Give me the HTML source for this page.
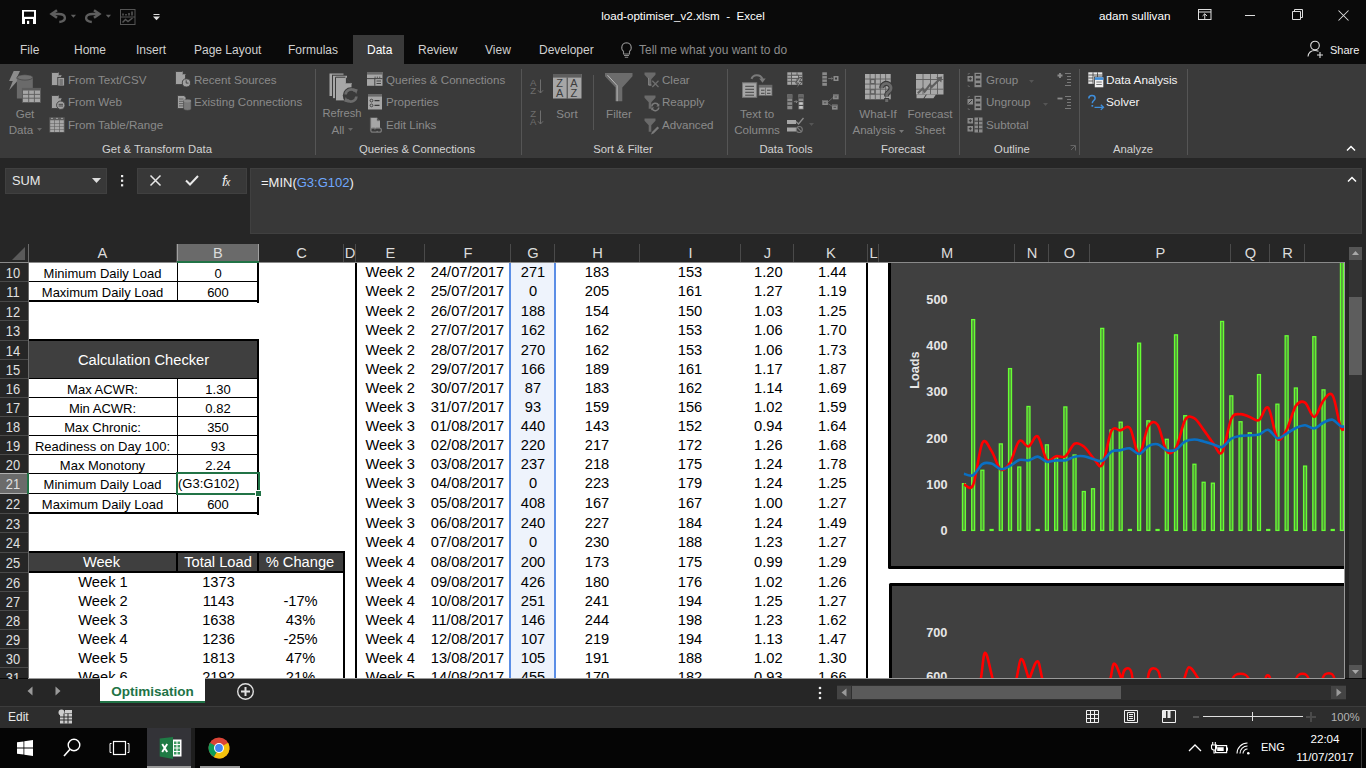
<!DOCTYPE html>
<html><head><meta charset="utf-8"><style>
html,body{margin:0;padding:0;}
body{width:1366px;height:768px;overflow:hidden;position:relative;background:#0a0a0a;font-family:"Liberation Sans", sans-serif;}
.t{position:absolute;white-space:pre;font-family:"Liberation Sans", sans-serif;}
svg{overflow:visible;}
</style></head><body>
<div style="position:absolute;left:0px;top:0px;width:1366px;height:64px;background:#0a0a0a"></div><svg style="position:absolute;left:22px;top:10px;" width="14" height="14" viewBox="0 0 14 14"><path d="M0 0h14v14H0z" fill="#fff"/><rect x="2" y="1.6" width="10" height="5.2" fill="#0a0a0a"/><rect x="3" y="9" width="8" height="5" fill="#0a0a0a"/><rect x="5" y="10.8" width="2.2" height="3.2" fill="#fff"/></svg><svg style="position:absolute;left:50px;top:9px;" width="28" height="16" viewBox="0 0 28 16"><path d="M7 1.2L1.6 5L7 8.8" stroke="#5e5e5e" stroke-width="2.6" fill="none"/><path d="M2.5 5H8.5C12.5 5 14.9 6.6 14.9 9C14.9 11.2 13 12.6 9.3 13" stroke="#5e5e5e" stroke-width="2.4" fill="none"/><path d="M20.8 5.8h5.2l-2.6 3z" fill="#5e5e5e"/></svg><svg style="position:absolute;left:85px;top:9px;" width="28" height="16" viewBox="0 0 28 16"><path d="M9 1.2L14.4 5L9 8.8" stroke="#5e5e5e" stroke-width="2.6" fill="none"/><path d="M13.5 5H7.5C3.5 5 1.1 6.6 1.1 9C1.1 11.2 3 12.6 6.8 13" stroke="#5e5e5e" stroke-width="2.4" fill="none"/><path d="M20.8 5.8h5.2l-2.6 3z" fill="#5e5e5e"/></svg><svg style="position:absolute;left:120px;top:9px;" width="16" height="16" viewBox="0 0 16 16"><rect x="0.5" y="0.5" width="14.5" height="15" stroke="#555" stroke-width="1" fill="none"/><path d="M0.5 8h14.5" stroke="#555"/><path d="M3 6.5v-2M6 6.5v-1.5M9 6.5v-2.5M12 6.5v-4" stroke="#555" stroke-width="1.6"/><path d="M2.5 13.5l3-3 2.5 2 4.5-3.5" stroke="#555" stroke-width="1.5" fill="none"/></svg><svg style="position:absolute;left:153px;top:14px;" width="7" height="7" viewBox="0 0 7 7"><path d="M0.5 0.5h6" stroke="#ddd" stroke-width="1"/><path d="M0 2.5h7l-3.5 3.8z" fill="#ddd"/></svg><div class="t" style="left:383px;width:600px;text-align:center;top:10.18px;font-size:11.6px;line-height:11.6px;color:#ffffff;">load-optimiser_v2.xlsm  -  Excel</div><div class="t" style="left:1099px;top:10.10px;font-size:11.7px;line-height:11.7px;color:#ffffff;">adam sullivan</div><svg style="position:absolute;left:1198px;top:9px;" width="14" height="12" viewBox="0 0 14 12"><rect x="0.5" y="0.5" width="12.5" height="10" stroke="#ddd" fill="none"/><path d="M0.5 3h12.5M6.75 10V4.8M4.5 7l2.25-2.2L9 7" stroke="#ddd" fill="none"/></svg><svg style="position:absolute;left:1245px;top:15px;" width="12" height="2" viewBox="0 0 12 2"><rect x="0" y="0" width="10" height="1" fill="#ddd"/></svg><svg style="position:absolute;left:1292px;top:9px;" width="11" height="12" viewBox="0 0 11 12"><path d="M2.5 2.5V0.5h8v8h-2M0.5 2.5h8v8h-8z" stroke="#ddd" fill="none"/></svg><svg style="position:absolute;left:1338px;top:10px;" width="11" height="11" viewBox="0 0 11 11"><path d="M0.5 0.5L10.5 10.5M10.5 0.5L0.5 10.5" stroke="#ddd" stroke-width="1.05" fill="none"/></svg><div style="position:absolute;left:353px;top:35px;width:51px;height:29px;background:#3a3a3a"></div><div class="t" style="left:20px;top:43.84px;font-size:12px;line-height:12px;color:#d0d0d0;">File</div><div class="t" style="left:74px;top:43.84px;font-size:12px;line-height:12px;color:#d0d0d0;">Home</div><div class="t" style="left:136px;top:43.84px;font-size:12px;line-height:12px;color:#d0d0d0;">Insert</div><div class="t" style="left:194px;top:43.84px;font-size:12px;line-height:12px;color:#d0d0d0;">Page Layout</div><div class="t" style="left:288px;top:43.84px;font-size:12px;line-height:12px;color:#d0d0d0;">Formulas</div><div class="t" style="left:367px;top:43.84px;font-size:12px;line-height:12px;color:#ffffff;">Data</div><div class="t" style="left:418px;top:43.84px;font-size:12px;line-height:12px;color:#d0d0d0;">Review</div><div class="t" style="left:485px;top:43.84px;font-size:12px;line-height:12px;color:#d0d0d0;">View</div><div class="t" style="left:539px;top:43.84px;font-size:12px;line-height:12px;color:#d0d0d0;">Developer</div><svg style="position:absolute;left:621px;top:42px;" width="12" height="16" viewBox="0 0 12 16"><path d="M5.5 0.8a4.8 4.8 0 0 1 3 8.5v2.7h-6v-2.7a4.8 4.8 0 0 1 3-8.5z" stroke="#8c8c8c" stroke-width="1.1" fill="none"/><path d="M3 13.5h5M3.8 15.3h3.4" stroke="#8c8c8c" stroke-width="1.1"/></svg><div class="t" style="left:639px;top:43.84px;font-size:12px;line-height:12px;color:#8c8c8c;">Tell me what you want to do</div><svg style="position:absolute;left:1307px;top:40px;" width="18" height="18" viewBox="0 0 18 18"><circle cx="8" cy="5.5" r="4.3" stroke="#ddd" stroke-width="1.1" fill="none"/><path d="M1 16.5c0.5-4 3-6 7-6c1.5 0 2.5 0.3 3.5 0.8M13 12v6M10 15h6" stroke="#ddd" stroke-width="1.1" fill="none"/></svg><div class="t" style="left:1330px;top:44.69px;font-size:11px;line-height:11px;color:#f0f0f0;">Share</div><div style="position:absolute;left:0px;top:64px;width:1366px;height:94px;background:#3a3a3a"></div><div style="position:absolute;left:315px;top:69px;width:1px;height:86px;background:#555"></div><div style="position:absolute;left:521px;top:69px;width:1px;height:86px;background:#555"></div><div style="position:absolute;left:727px;top:69px;width:1px;height:86px;background:#555"></div><div style="position:absolute;left:845px;top:69px;width:1px;height:86px;background:#555"></div><div style="position:absolute;left:959px;top:69px;width:1px;height:86px;background:#555"></div><div style="position:absolute;left:1079px;top:69px;width:1px;height:86px;background:#555"></div><div style="position:absolute;left:1187px;top:69px;width:1px;height:86px;background:#555"></div><div style="position:absolute;left:593px;top:75px;width:1px;height:55px;background:#555"></div><div class="t" style="left:-143px;width:600px;text-align:center;top:144.43px;font-size:11.3px;line-height:11.3px;color:#d2d2d2;">Get &amp; Transform Data</div><div class="t" style="left:117px;width:600px;text-align:center;top:144.43px;font-size:11.3px;line-height:11.3px;color:#d2d2d2;">Queries &amp; Connections</div><div class="t" style="left:323px;width:600px;text-align:center;top:144.43px;font-size:11.3px;line-height:11.3px;color:#d2d2d2;">Sort &amp; Filter</div><div class="t" style="left:486px;width:600px;text-align:center;top:144.43px;font-size:11.3px;line-height:11.3px;color:#d2d2d2;">Data Tools</div><div class="t" style="left:603px;width:600px;text-align:center;top:144.43px;font-size:11.3px;line-height:11.3px;color:#d2d2d2;">Forecast</div><div class="t" style="left:712px;width:600px;text-align:center;top:144.43px;font-size:11.3px;line-height:11.3px;color:#d2d2d2;">Outline</div><div class="t" style="left:833px;width:600px;text-align:center;top:144.43px;font-size:11.3px;line-height:11.3px;color:#d2d2d2;">Analyze</div><svg style="position:absolute;left:9px;top:71px;" width="33" height="33" viewBox="0 0 33 33"><path d="M4.7 0H11L7.4 7.8H10.3L0.1 19.2L3.8 10H0.1z" fill="#8c8c8c"/><path d="M7.9 6.4a7.9 2.7 0 0 1 15.9 0V27.4H7.9z" fill="#6a6a6a"/><ellipse cx="15.9" cy="6.4" rx="7.9" ry="2.7" fill="#707070" stroke="#3a3a3a" stroke-width="0.6"/><rect x="12.9" y="16.9" width="19.1" height="15" fill="#5c5c5c"/><rect x="14" y="19.5" width="17" height="11.5" fill="#a6a6a6"/><path d="M14 23.4h17M14 27.2h17M19.7 19.5v11.5M25.4 19.5v11.5" stroke="#5c5c5c" stroke-width="0.9"/></svg><div class="t" style="left:-275px;width:600px;text-align:center;top:107.68px;font-size:11.6px;line-height:11.6px;color:#8a8a8a;">Get</div><div class="t" style="left:-279px;width:600px;text-align:center;top:123.68px;font-size:11.6px;line-height:11.6px;color:#8a8a8a;">Data</div><svg style="position:absolute;left:36.5px;top:128px;" width="5" height="3" viewBox="0 0 5 3"><path d="M0 0h5l-2.5 3z" fill="#666"/></svg><svg style="position:absolute;left:51px;top:72px;" width="16" height="16" viewBox="0 0 16 16"><path d="M0.5 0.5h7l3 3V13.5H0.5z" fill="#a0a0a0" stroke="#3a3a3a" stroke-width="0.8"/><path d="M7.5 0.5v3h3" fill="#3a3a3a" stroke="#8c8c8c" stroke-width="0.8"/><rect x="6.8" y="5.4" width="6.8" height="8.6" fill="#a0a0a0" stroke="#3a3a3a" stroke-width="0.9"/><path d="M8.5 8h3.4M8.5 10h3.4M8.5 12h3.4" stroke="#3a3a3a" stroke-width="0.8"/></svg><div class="t" style="left:68px;top:74.18px;font-size:11.6px;line-height:11.6px;color:#8a8a8a;">From Text/CSV</div><svg style="position:absolute;left:51px;top:95px;" width="16" height="16" viewBox="0 0 16 16"><path d="M0.5 0.5h7l3 3V13.5H0.5z" fill="#a0a0a0" stroke="#3a3a3a" stroke-width="0.8"/><path d="M7.5 0.5v3h3" fill="#3a3a3a" stroke="#8c8c8c" stroke-width="0.8"/><circle cx="9.8" cy="10.2" r="4.2" fill="#a0a0a0" stroke="#3a3a3a" stroke-width="0.9"/><path d="M7.6 9.3h4.4M7.6 11h4.4" stroke="#3a3a3a" stroke-width="0.9"/></svg><div class="t" style="left:68px;top:96.18px;font-size:11.6px;line-height:11.6px;color:#8a8a8a;">From Web</div><svg style="position:absolute;left:49px;top:117px;" width="16" height="16" viewBox="0 0 16 16"><rect x="0.3" y="0.3" width="15.4" height="15.2" fill="#5c5c5c"/><path d="M2 1.4h2M7 1.4h2M12 1.4h2" stroke="#a6a6a6" stroke-width="0.9"/><path d="M1.2 3.3h4.2v2.6H1.2zM6 3.3h4v2.6H6zM10.6 3.3h4.2v2.6h-4.2zM1.2 6.6h4.2v2.6H1.2zM6 6.6h4v2.6H6zM10.6 6.6h4.2v2.6h-4.2zM1.2 9.8h4.2v2.6H1.2zM6 9.8h4v2.6H6zM10.6 9.8h4.2v2.6h-4.2zM1.2 12.9h4.2v2H1.2zM6 12.9h4v2H6zM10.6 12.9h4.2v2h-4.2z" fill="#a6a6a6"/></svg><div class="t" style="left:68px;top:119.18px;font-size:11.6px;line-height:11.6px;color:#8a8a8a;">From Table/Range</div><svg style="position:absolute;left:175px;top:71px;" width="16" height="16" viewBox="0 0 16 16"><path d="M0.5 0.5h7l3 3V13.5H0.5z" fill="#a0a0a0" stroke="#3a3a3a" stroke-width="0.8"/><path d="M7.5 0.5v3h3" fill="#3a3a3a" stroke="#8c8c8c" stroke-width="0.8"/><circle cx="11.4" cy="11.9" r="4.1" fill="#a0a0a0" stroke="#3a3a3a" stroke-width="0.9"/><path d="M11.2 9.3v2.8h2.3" stroke="#3a3a3a" stroke-width="0.9" fill="none"/></svg><div class="t" style="left:194px;top:74.18px;font-size:11.6px;line-height:11.6px;color:#8a8a8a;">Recent Sources</div><svg style="position:absolute;left:177px;top:95px;" width="16" height="16" viewBox="0 0 16 16"><path d="M0.5 0.5h6.5l2 2V13.5H0.5z" fill="#a0a0a0" stroke="#3a3a3a" stroke-width="0.8"/><path d="M2 4h4.5M2 6.3h4.5M2 8.6h4.5M2 10.9h4.5" stroke="#5a5a5a" stroke-width="0.9"/><path d="M6.6 6a3.8 1.4 0 0 1 7.6 0V14a3.8 1.4 0 0 1-7.6 0z" fill="#7a7a7a" stroke="#3a3a3a" stroke-width="0.6"/><ellipse cx="10.4" cy="6" rx="3.8" ry="1.4" fill="#8a8a8a"/></svg><div class="t" style="left:194px;top:96.18px;font-size:11.6px;line-height:11.6px;color:#8a8a8a;">Existing Connections</div><svg style="position:absolute;left:328px;top:72px;" width="32" height="32" viewBox="0 0 32 32"><rect x="1" y="1" width="15" height="23.5" fill="#a6a6a6" stroke="#3a3a3a" stroke-width="1"/><rect x="4.5" y="3.2" width="15" height="23.5" fill="#a6a6a6" stroke="#3a3a3a" stroke-width="1"/><path d="M7.5 5.2h10l6.5 6.5v17.2h-16.5z" fill="#a6a6a6" stroke="#3a3a3a" stroke-width="1"/><path d="M17.5 5.2v6.5h6.5" fill="#3a3a3a" stroke="#a6a6a6" stroke-width="0.8"/><circle cx="23" cy="23.5" r="8.2" fill="#3a3a3a"/><path d="M17.6 22.5a5.5 5.5 0 0 1 9.6-3.2M28.4 24.5a5.5 5.5 0 0 1-9.6 3.2" stroke="#6c6c6c" stroke-width="2.6" fill="none"/><path d="M25.2 16.2l4.6 1.2-1.6 4.6zM20.8 30.8l-4.6-1.2 1.6-4.6z" fill="#6c6c6c"/></svg><div class="t" style="left:42px;width:600px;text-align:center;top:108.02px;font-size:11.2px;line-height:11.2px;color:#8a8a8a;">Refresh</div><div class="t" style="left:38px;width:600px;text-align:center;top:123.68px;font-size:11.6px;line-height:11.6px;color:#8a8a8a;">All</div><svg style="position:absolute;left:348px;top:128px;" width="5" height="3" viewBox="0 0 5 3"><path d="M0 0h5l-2.5 3z" fill="#666"/></svg><svg style="position:absolute;left:367px;top:72px;" width="16" height="14" viewBox="0 0 16 14"><rect x="0" y="0" width="15.5" height="13.8" fill="#a6a6a6"/><rect x="0" y="0" width="15.5" height="2.6" fill="#6a6a6a"/><path d="M7.5 5.2h1.2M9.8 5.2h1.2M12.1 5.2h1.2" stroke="#3a3a3a" stroke-width="0.9"/><path d="M0 6.6h15.5M7.8 6.6v7.2" stroke="#3a3a3a" stroke-width="0.9"/><path d="M9.5 9h4.5M9.5 11.5h4.5" stroke="#3a3a3a" stroke-width="0.9"/></svg><div class="t" style="left:386px;top:74.18px;font-size:11.6px;line-height:11.6px;color:#8a8a8a;">Queries &amp; Connections</div><svg style="position:absolute;left:368px;top:94px;" width="15" height="16" viewBox="0 0 15 16"><rect x="0" y="0" width="14" height="15.5" fill="#a6a6a6"/><rect x="0" y="0" width="14" height="2.6" fill="#6a6a6a"/><circle cx="3.5" cy="6.6" r="1.4" stroke="#3a3a3a" stroke-width="0.9" fill="none"/><circle cx="3.5" cy="11.4" r="1.4" stroke="#3a3a3a" stroke-width="0.9" fill="none"/><path d="M6.5 6.6h5M6.5 11.4h5" stroke="#3a3a3a" stroke-width="1.1"/></svg><div class="t" style="left:386px;top:96.18px;font-size:11.6px;line-height:11.6px;color:#8a8a8a;">Properties</div><svg style="position:absolute;left:369px;top:117px;" width="16" height="17" viewBox="0 0 16 17"><path d="M1.5 0.8h6.5l3 3V11H1.5z" fill="#a6a6a6"/><path d="M8 0.8v3h3" fill="#3a3a3a" stroke="#8a8a8a" stroke-width="0.7"/><path d="M1.5 0.8V13.5" stroke="#6a6a6a" stroke-width="1.2"/><path d="M5.8 11.2h-2a2 2 0 0 0 0 4h3a2 2 0 0 0 1.8-1.2M8.2 15.2h2.2a2 2 0 0 0 0-4h-3a2 2 0 0 0-1.8 1.2" stroke="#7a7a7a" stroke-width="1.2" fill="none"/></svg><div class="t" style="left:386px;top:119.18px;font-size:11.6px;line-height:11.6px;color:#8a8a8a;">Edit Links</div><svg style="position:absolute;left:530px;top:78px;" width="15" height="18" viewBox="0 0 15 18"><text x="0" y="8" font-size="9.6" font-family="Liberation Sans" fill="#6e6e6e">A</text><text x="0.3" y="15.8" font-size="9.6" font-family="Liberation Sans" fill="#6e6e6e">Z</text><path d="M10.5 1.5v13.5M8 12.3l2.5 2.7 2.5-2.7" stroke="#6e6e6e" stroke-width="1" fill="none"/></svg><svg style="position:absolute;left:530px;top:109px;" width="15" height="18" viewBox="0 0 15 18"><text x="0.3" y="8" font-size="9.6" font-family="Liberation Sans" fill="#6e6e6e">Z</text><text x="0" y="15.8" font-size="9.6" font-family="Liberation Sans" fill="#6e6e6e">A</text><path d="M10.5 1.5v13.5M8 12.3l2.5 2.7 2.5-2.7" stroke="#6e6e6e" stroke-width="1" fill="none"/></svg><svg style="position:absolute;left:553px;top:74px;" width="29" height="25" viewBox="0 0 29 25"><rect x="0" y="0" width="28.5" height="24.5" fill="#a6a6a6"/><rect x="0" y="0" width="28.5" height="3.6" fill="#5e5e5e"/><path d="M14.2 3.6v21" stroke="#3a3a3a" stroke-width="0.9"/><text x="3.2" y="13" font-size="11" font-family="Liberation Sans" fill="#3c3c3c">Z</text><text x="3" y="23" font-size="11" font-family="Liberation Sans" fill="#3c3c3c">A</text><text x="17.2" y="13" font-size="11" font-family="Liberation Sans" fill="#3c3c3c">A</text><text x="17.5" y="23" font-size="11" font-family="Liberation Sans" fill="#3c3c3c">Z</text></svg><div class="t" style="left:267px;width:600px;text-align:center;top:108.18px;font-size:11.6px;line-height:11.6px;color:#8a8a8a;">Sort</div><svg style="position:absolute;left:605px;top:73px;" width="28" height="28" viewBox="0 0 28 28"><path d="M0 0h27.5v3.2l-10.2 11.2v13.8h-6.8v-13.8l-10.5-11.2z" fill="#6c6c6c"/><path d="M2.5 2.2l9.6 10.4v15.6" stroke="#c4c4c4" stroke-width="0.9" fill="none"/></svg><div class="t" style="left:319px;width:600px;text-align:center;top:108.18px;font-size:11.6px;line-height:11.6px;color:#8a8a8a;">Filter</div><svg style="position:absolute;left:644px;top:72px;" width="17" height="17" viewBox="0 0 17 17"><path d="M0.5 0.5h11v2.2l-4.2 4.5v6.5h-2.6v-6.5l-4.2-4.5z" fill="#6a6a6a"/><path d="M8.3 8.8l6.2 6.2M14.5 8.8l-6.2 6.2" stroke="#6e6e6e" stroke-width="1.3"/><path d="M4.5 6v7h3" stroke="#8a8a8a" stroke-width="0.8" fill="none"/></svg><div class="t" style="left:662px;top:74.18px;font-size:11.6px;line-height:11.6px;color:#8a8a8a;">Clear</div><svg style="position:absolute;left:644px;top:95px;" width="17" height="17" viewBox="0 0 17 17"><path d="M0.5 0.5h11v2.2l-4.2 4.5v6.5h-2.6v-6.5l-4.2-4.5z" fill="#6a6a6a"/><path d="M7.8 11.5a3.6 3.6 0 0 1 6.8-1.2M14.8 12.5a3.6 3.6 0 0 1-6.8 1.2" stroke="#7a7a7a" stroke-width="1.5" fill="none"/><path d="M15.3 8.5v3h-3zM7.3 15.5v-3h3z" fill="#7a7a7a"/></svg><div class="t" style="left:662px;top:96.18px;font-size:11.6px;line-height:11.6px;color:#8a8a8a;">Reapply</div><svg style="position:absolute;left:644px;top:118px;" width="17" height="17" viewBox="0 0 17 17"><path d="M0.5 0.5h11v2.2l-4.2 4.5v6.5h-2.6v-6.5l-4.2-4.5z" fill="#6a6a6a"/><path d="M7 16.5l1-2.5 5.5-5.5 1.6 1.6-5.5 5.5z" fill="#7a7a7a"/></svg><div class="t" style="left:662px;top:119.18px;font-size:11.6px;line-height:11.6px;color:#8a8a8a;">Advanced</div><svg style="position:absolute;left:742px;top:72px;" width="32" height="27" viewBox="0 0 32 27"><path d="M9.5 6.8C11 2.5 18 1.5 20.5 7" stroke="#7a7a7a" stroke-width="2" fill="none"/><path d="M17.2 6.5h6.5l-3.2 4.2z" fill="#7a7a7a"/><rect x="0.5" y="10.8" width="14.2" height="14.5" fill="#a6a6a6" stroke="#777" stroke-width="1"/><path d="M3.2 14.3h8.8M3.2 17.3h8.8M3.2 20.3h8.8M3.2 23.2h8.8" stroke="#444" stroke-width="1"/><rect x="17" y="13.2" width="13" height="10.4" fill="#a6a6a6" stroke="#666" stroke-width="0.8"/><rect x="17" y="13.2" width="13" height="2.4" fill="#6a6a6a"/><path d="M19 18.2h3.5M25 18.2h3.5M19 21.3h3.5M25 21.3h3.5" stroke="#444" stroke-width="1"/><path d="M23.5 15.6v8" stroke="#666" stroke-width="0.8"/></svg><div class="t" style="left:457px;width:600px;text-align:center;top:108.18px;font-size:11.6px;line-height:11.6px;color:#8a8a8a;">Text to</div><div class="t" style="left:457px;width:600px;text-align:center;top:124.18px;font-size:11.6px;line-height:11.6px;color:#8a8a8a;">Columns</div><svg style="position:absolute;left:787px;top:72px;" width="17" height="16" viewBox="0 0 17 16"><rect x="0.3" y="0.3" width="15" height="12.5" fill="#a6a6a6"/><path d="M0.3 3.3h15M0.3 6.3h15M0.3 9.3h15M4.5 0.3v12.5M10 0.3v12.5" stroke="#555" stroke-width="0.9"/><rect x="4.5" y="3.3" width="7" height="3" fill="#b8b8b8" stroke="#555" stroke-width="0.9"/><path d="M12.5 5.5l-4 5.5h3l-2 5 6-6.5h-3l2.3-4z" fill="#9a9a9a" stroke="#3a3a3a" stroke-width="0.7"/></svg><svg style="position:absolute;left:787px;top:94px;" width="17" height="16" viewBox="0 0 17 16"><rect x="0.3" y="0.3" width="5" height="15" fill="#8a8a8a"/><path d="M0.3 4h5M0.3 7.7h5M0.3 11.4h5" stroke="#3a3a3a" stroke-width="0.9"/><rect x="0.3" y="0.3" width="5" height="3.7" fill="#666"/><rect x="11.5" y="0.3" width="5" height="15" fill="#8a8a8a"/><rect x="11.5" y="0.3" width="5" height="3.7" fill="#666"/><path d="M11.5 4h5M11.5 7.7h5M11.5 11.4h5" stroke="#3a3a3a" stroke-width="0.9"/><rect x="12.3" y="8.3" width="3.4" height="2.4" fill="#c8c8c8"/><rect x="12.3" y="12" width="3.4" height="2.6" fill="#c8c8c8"/><path d="M6.8 7.7h3.5M9 6.4l1.3 1.3L9 9" stroke="#8a8a8a" stroke-width="0.9" fill="none"/></svg><svg style="position:absolute;left:787px;top:117px;" width="18" height="17" viewBox="0 0 18 17"><rect x="0" y="3" width="9" height="4" fill="#a6a6a6"/><rect x="0" y="10.5" width="9" height="4" fill="#a6a6a6"/><path d="M9 4.5l2.5 2.5L16.5 1" stroke="#8a8a8a" stroke-width="1.3" fill="none"/><circle cx="12.3" cy="12.5" r="3" stroke="#7a7a7a" stroke-width="1.1" fill="none"/><path d="M10.2 10.4l4.2 4.2" stroke="#7a7a7a" stroke-width="1.1"/></svg><svg style="position:absolute;left:809px;top:123px;" width="5" height="3" viewBox="0 0 5 3"><path d="M0 0h5l-2.5 3z" fill="#555"/></svg><svg style="position:absolute;left:822px;top:72px;" width="17" height="15" viewBox="0 0 17 15"><rect x="0.3" y="0.3" width="4.6" height="13.5" fill="#8a8a8a"/><path d="M0.3 3.6h4.6M0.3 7h4.6M0.3 10.4h4.6" stroke="#3a3a3a" stroke-width="0.9"/><rect x="11.5" y="4" width="5" height="5" fill="#8a8a8a"/><rect x="13" y="5.5" width="2" height="2" fill="#3a3a3a"/><path d="M6.2 6.5h4.5M9.4 5.3l1.3 1.2-1.3 1.2" stroke="#7a7a7a" stroke-width="0.8" fill="none"/></svg><svg style="position:absolute;left:822px;top:94px;" width="17" height="17" viewBox="0 0 17 17"><rect x="0.3" y="6" width="5.6" height="5" fill="#8a8a8a"/><rect x="11" y="0.3" width="5.6" height="5" fill="#8a8a8a"/><rect x="10" y="10.6" width="5.6" height="5" fill="#8a8a8a"/><rect x="0.3" y="6" width="5.6" height="1.2" fill="#666"/><rect x="11" y="0.3" width="5.6" height="1.2" fill="#666"/><rect x="10" y="10.6" width="5.6" height="1.2" fill="#666"/><path d="M1.8 8.8h2.6M12.5 3h2.6M11.5 13.3h2.6" stroke="#3a3a3a" stroke-width="0.8"/><path d="M5.9 8L11 3.5M5.9 9.5l4.3 2.8" stroke="#6a6a6a" stroke-width="0.9"/></svg><svg style="position:absolute;left:865px;top:74px;" width="30" height="30" viewBox="0 0 30 30"><rect x="0" y="0" width="25.7" height="25.3" fill="#a8a8a8"/><path d="M5.1 0v25.3M10.3 0v25.3M15.4 0v25.3M20.6 0v25.3M0 5h25.7M0 10.1h25.7M0 15.2h25.7M0 20.2h25.7" stroke="#5e5e5e" stroke-width="0.9"/><rect x="5.6" y="5.5" width="4.2" height="4.1" fill="#a8a8a8" stroke="#5e5e5e" stroke-width="1.2"/><rect x="5.6" y="15.7" width="4.2" height="4.1" fill="#a8a8a8" stroke="#5e5e5e" stroke-width="1.2"/><path d="M16.8 14.2a4.6 4.6 0 1 1 7.2 3.6c-1.6 1-2.3 1.7-2.3 3.4v1.3" stroke="#3a3a3a" stroke-width="5" fill="none"/><rect x="19.2" y="24" width="5" height="5" fill="#3a3a3a"/><path d="M16.8 14.2a4.6 4.6 0 1 1 7.2 3.6c-1.6 1-2.3 1.7-2.3 3.4v1.3" stroke="#6a6a6a" stroke-width="2.8" fill="none"/><rect x="20.2" y="25" width="3" height="3" fill="#6a6a6a"/></svg><div class="t" style="left:578px;width:600px;text-align:center;top:108.18px;font-size:11.6px;line-height:11.6px;color:#8a8a8a;">What-If</div><div class="t" style="left:574px;width:600px;text-align:center;top:124.18px;font-size:11.6px;line-height:11.6px;color:#8a8a8a;">Analysis</div><svg style="position:absolute;left:899px;top:130px;" width="5" height="3" viewBox="0 0 5 3"><path d="M0 0h5l-2.5 3z" fill="#777"/></svg><svg style="position:absolute;left:916px;top:74px;" width="30" height="26" viewBox="0 0 30 26"><rect x="0" y="0" width="27.5" height="20.5" fill="#a8a8a8"/><path d="M7 0v20.5M14.5 0v20.5M21.5 0v20.5M0 5.5h27.5M0 15.2h27.5" stroke="#5e5e5e" stroke-width="0.9"/><path d="M0.5 20.5h9.5l-2.6 3.8H0.5zM11 20.5h9l-2.6 3.8H8.4z" fill="#a8a8a8"/><path d="M1.8 19.2L6.7 14.6L8.6 17.6L14 10.5L15.6 13L24.6 4.2" stroke="#5e5e5e" stroke-width="2.1" fill="none"/><path d="M26.2 2.5l-6.2 0.9 5.3 5.2z" fill="#5e5e5e"/></svg><div class="t" style="left:630px;width:600px;text-align:center;top:108.18px;font-size:11.6px;line-height:11.6px;color:#8a8a8a;">Forecast</div><div class="t" style="left:630px;width:600px;text-align:center;top:124.18px;font-size:11.6px;line-height:11.6px;color:#8a8a8a;">Sheet</div><svg style="position:absolute;left:967px;top:72px;" width="16" height="16" viewBox="0 0 16 16"><rect x="0.5" y="4" width="5.5" height="5.5" fill="#8a8a8a"/><path d="M1.8 6.7h3M3.3 5.2v3" stroke="#3a3a3a" stroke-width="1"/><path d="M3 1.5h-1.8v1.5M3 14.5h-1.8v-1.5" stroke="#666" stroke-width="0.8" fill="none"/><rect x="7.5" y="0.8" width="7" height="14.4" fill="#8a8a8a"/><path d="M8.8 2.8h4.4M8.8 7.5h4.4M8.8 12.2h4.4" stroke="#3a3a3a" stroke-width="1.8"/></svg><div class="t" style="left:986px;top:74.18px;font-size:11.6px;line-height:11.6px;color:#8a8a8a;">Group</div><svg style="position:absolute;left:1029px;top:80px;" width="5" height="3" viewBox="0 0 5 3"><path d="M0 0h5l-2.5 3z" fill="#555"/></svg><svg style="position:absolute;left:967px;top:95px;" width="16" height="16" viewBox="0 0 16 16"><rect x="0.5" y="4" width="5.5" height="5.5" fill="#8a8a8a"/><path d="M1.5 8.5l3.5-3.5" stroke="#3a3a3a" stroke-width="1"/><path d="M3 1.5h-1.8v1.5M3 14.5h-1.8v-1.5" stroke="#666" stroke-width="0.8" fill="none"/><rect x="7.5" y="0.8" width="7" height="14.4" fill="#8a8a8a"/><path d="M8.8 2.8h4.4M8.8 7.5h4.4M8.8 12.2h4.4" stroke="#3a3a3a" stroke-width="1.8"/></svg><div class="t" style="left:986px;top:96.18px;font-size:11.6px;line-height:11.6px;color:#8a8a8a;">Ungroup</div><svg style="position:absolute;left:1043px;top:103px;" width="5" height="3" viewBox="0 0 5 3"><path d="M0 0h5l-2.5 3z" fill="#555"/></svg><svg style="position:absolute;left:967px;top:117px;" width="16" height="16" viewBox="0 0 16 16"><rect x="0.5" y="1" width="5.5" height="5.5" fill="#8a8a8a"/><rect x="0.5" y="9" width="5.5" height="5.5" fill="#8a8a8a"/><path d="M1.8 3.7h3M3.3 2.2v3M1.8 11.7h3M3.3 10.2v3" stroke="#3a3a3a" stroke-width="1"/><rect x="7.5" y="0.5" width="8" height="15" fill="#8a8a8a"/><path d="M7.5 4.2h8M7.5 8h8M7.5 11.8h8M11.5 0.5v15" stroke="#3a3a3a" stroke-width="1"/></svg><div class="t" style="left:986px;top:119.18px;font-size:11.6px;line-height:11.6px;color:#8a8a8a;">Subtotal</div><svg style="position:absolute;left:1057px;top:72px;" width="15" height="15" viewBox="0 0 15 15"><path d="M0.5 3.5h5M3 1v5" stroke="#8a8a8a" stroke-width="1.8"/><path d="M8 1.5h6M10 4.5h4M10 7.5h4M10 10.5h4M8 13.5h6" stroke="#7a7a7a" stroke-width="1"/></svg><svg style="position:absolute;left:1057px;top:95px;" width="15" height="15" viewBox="0 0 15 15"><path d="M0.5 3.5h5" stroke="#8a8a8a" stroke-width="1.8"/><path d="M8 1.5h6M10 4.5h4M10 7.5h4M10 10.5h4M8 13.5h6" stroke="#7a7a7a" stroke-width="1"/></svg><svg style="position:absolute;left:1070px;top:145px;" width="6" height="6" viewBox="0 0 6 6"><path d="M0.5 0.5h5v5M1 5l4-4" stroke="#666" fill="none"/></svg><svg style="position:absolute;left:1088px;top:72px;" width="16" height="16" viewBox="0 0 16 16"><rect x="0.3" y="0.3" width="14" height="11.5" fill="#e8e8e8"/><path d="M0.3 3h14M5 0.3v11.5M9.5 0.3v11.5M0.3 6h4.7M0.3 9h4.7" stroke="#3a3a3a" stroke-width="0.8"/><rect x="6" y="4.5" width="9.5" height="11" fill="#3a3a3a"/><rect x="6.8" y="5.3" width="8.5" height="10" fill="#f0f0f0"/><rect x="6.8" y="5.3" width="8.5" height="2.6" fill="#3f8fdc"/><path d="M8.3 10h5.5M8.3 12.5h5.5" stroke="#555" stroke-width="0.8"/></svg><div class="t" style="left:1106px;top:74.81px;font-size:11.8px;line-height:11.8px;color:#f4f4f4;">Data Analysis</div><svg style="position:absolute;left:1088px;top:95px;" width="18" height="16" viewBox="0 0 18 16"><path d="M0.8 3.5C0.8 1.5 2.3 0.6 4 0.6C5.8 0.6 7.1 1.7 7.1 3.2C7.1 5.5 4.3 5.6 4.3 8.2" stroke="#3f8fdc" stroke-width="1.5" fill="none"/><rect x="3.5" y="10" width="1.7" height="1.7" fill="#3f8fdc"/><path d="M6.5 12.3h9M12.8 9.7l2.7 2.6-2.7 2.6" stroke="#3f8fdc" stroke-width="1.3" fill="none"/></svg><div class="t" style="left:1106px;top:97.01px;font-size:11.8px;line-height:11.8px;color:#f4f4f4;">Solver</div><svg style="position:absolute;left:1346px;top:145px;" width="10" height="6" viewBox="0 0 10 6"><path d="M1 5.5l4-4 4 4" stroke="#fff" stroke-width="1.5" fill="none"/></svg><div style="position:absolute;left:0px;top:158px;width:1366px;height:86px;background:#262626"></div><div style="position:absolute;left:5px;top:168px;width:102px;height:26px;background:#383838;border:1px solid #404040;box-sizing:border-box"></div><div class="t" style="left:12px;top:174.96px;font-size:12.8px;line-height:12.8px;color:#e8e8e8;">SUM</div><svg style="position:absolute;left:92px;top:178px;" width="9" height="5" viewBox="0 0 9 5"><path d="M0 0h9l-4.5 5z" fill="#ddd"/></svg><svg style="position:absolute;left:120.5px;top:175px;" width="3" height="12" viewBox="0 0 3 12"><rect x="0" y="0" width="2.2" height="2.2" fill="#eee"/><rect x="0" y="4.6" width="2.2" height="2.2" fill="#eee"/><rect x="0" y="9.2" width="2.2" height="2.2" fill="#eee"/></svg><div style="position:absolute;left:137px;top:168px;width:110px;height:26px;background:#383838;border:1px solid #404040;box-sizing:border-box"></div><svg style="position:absolute;left:150px;top:175px;" width="11" height="11" viewBox="0 0 11 11"><path d="M0.5 0.5L10.5 10.5M10.5 0.5L0.5 10.5" stroke="#e8e8e8" stroke-width="1.5"/></svg><svg style="position:absolute;left:185px;top:175px;" width="14" height="11" viewBox="0 0 14 11"><path d="M1 5.5L5 9.5L13 1" stroke="#e8e8e8" stroke-width="2" fill="none"/></svg><div class="t" style="left:222px;top:173.30px;font-size:15px;line-height:15px;color:#e8e8e8;font-family:"Liberation Serif",serif;font-weight:bold"><i>f</i><span style="font-size:10px;position:relative;left:-1px"><i>x</i></span></div><div style="position:absolute;left:250px;top:168px;width:1112px;height:66px;background:#383838;border:1px solid #404040;box-sizing:border-box"></div><div class="t" style="left:261px;top:176.00px;font-size:13px;line-height:13px;color:#f0f0f0;">=MIN(<span style="color:#6fa8ff">G3:G102</span>)</div><svg style="position:absolute;left:1347px;top:176px;" width="10" height="6" viewBox="0 0 10 6"><path d="M1 5.5l4-4 4 4" stroke="#fff" stroke-width="1.5" fill="none"/></svg><div style="position:absolute;left:0px;top:244px;width:1345px;height:18px;background:#262626"></div><svg style="position:absolute;left:10px;top:247px;" width="16" height="14" viewBox="0 0 16 14"><path d="M15 0V13H2z" fill="#5a5a5a"/></svg><div style="position:absolute;left:177px;top:244px;width:82px;height:18px;background:#6a6a6a"></div><div style="position:absolute;left:176px;top:244px;width:1px;height:18px;background:#4a4a4a"></div><div class="t" style="left:-197.5px;width:600px;text-align:center;top:246.08px;font-size:14.67px;line-height:14.67px;color:#dcdcdc;">A</div><div style="position:absolute;left:258px;top:244px;width:1px;height:18px;background:#4a4a4a"></div><div class="t" style="left:-82.0px;width:600px;text-align:center;top:246.08px;font-size:14.67px;line-height:14.67px;color:#dcdcdc;">B</div><div style="position:absolute;left:343px;top:244px;width:1px;height:18px;background:#4a4a4a"></div><div class="t" style="left:1.5px;width:600px;text-align:center;top:246.08px;font-size:14.67px;line-height:14.67px;color:#dcdcdc;">C</div><div style="position:absolute;left:355px;top:244px;width:1px;height:18px;background:#4a4a4a"></div><div class="t" style="left:50.0px;width:600px;text-align:center;top:246.08px;font-size:14.67px;line-height:14.67px;color:#dcdcdc;">D</div><div style="position:absolute;left:424px;top:244px;width:1px;height:18px;background:#4a4a4a"></div><div class="t" style="left:90.5px;width:600px;text-align:center;top:246.08px;font-size:14.67px;line-height:14.67px;color:#dcdcdc;">E</div><div style="position:absolute;left:510px;top:244px;width:1px;height:18px;background:#4a4a4a"></div><div class="t" style="left:168.0px;width:600px;text-align:center;top:246.08px;font-size:14.67px;line-height:14.67px;color:#dcdcdc;">F</div><div style="position:absolute;left:554px;top:244px;width:1px;height:18px;background:#4a4a4a"></div><div class="t" style="left:233.0px;width:600px;text-align:center;top:246.08px;font-size:14.67px;line-height:14.67px;color:#dcdcdc;">G</div><div style="position:absolute;left:639px;top:244px;width:1px;height:18px;background:#4a4a4a"></div><div class="t" style="left:297.5px;width:600px;text-align:center;top:246.08px;font-size:14.67px;line-height:14.67px;color:#dcdcdc;">H</div><div style="position:absolute;left:740px;top:244px;width:1px;height:18px;background:#4a4a4a"></div><div class="t" style="left:390.5px;width:600px;text-align:center;top:246.08px;font-size:14.67px;line-height:14.67px;color:#dcdcdc;">I</div><div style="position:absolute;left:793px;top:244px;width:1px;height:18px;background:#4a4a4a"></div><div class="t" style="left:467.5px;width:600px;text-align:center;top:246.08px;font-size:14.67px;line-height:14.67px;color:#dcdcdc;">J</div><div style="position:absolute;left:867px;top:244px;width:1px;height:18px;background:#4a4a4a"></div><div class="t" style="left:531.0px;width:600px;text-align:center;top:246.08px;font-size:14.67px;line-height:14.67px;color:#dcdcdc;">K</div><div style="position:absolute;left:878px;top:244px;width:1px;height:18px;background:#4a4a4a"></div><div class="t" style="left:573.5px;width:600px;text-align:center;top:246.08px;font-size:14.67px;line-height:14.67px;color:#dcdcdc;">L</div><div style="position:absolute;left:1014px;top:244px;width:1px;height:18px;background:#4a4a4a"></div><div class="t" style="left:647.0px;width:600px;text-align:center;top:246.08px;font-size:14.67px;line-height:14.67px;color:#dcdcdc;">M</div><div style="position:absolute;left:1048px;top:244px;width:1px;height:18px;background:#4a4a4a"></div><div class="t" style="left:732.0px;width:600px;text-align:center;top:246.08px;font-size:14.67px;line-height:14.67px;color:#dcdcdc;">N</div><div style="position:absolute;left:1089px;top:244px;width:1px;height:18px;background:#4a4a4a"></div><div class="t" style="left:769.5px;width:600px;text-align:center;top:246.08px;font-size:14.67px;line-height:14.67px;color:#dcdcdc;">O</div><div style="position:absolute;left:1230px;top:244px;width:1px;height:18px;background:#4a4a4a"></div><div class="t" style="left:860.5px;width:600px;text-align:center;top:246.08px;font-size:14.67px;line-height:14.67px;color:#dcdcdc;">P</div><div style="position:absolute;left:1269px;top:244px;width:1px;height:18px;background:#4a4a4a"></div><div class="t" style="left:950.5px;width:600px;text-align:center;top:246.08px;font-size:14.67px;line-height:14.67px;color:#dcdcdc;">Q</div><div style="position:absolute;left:1304px;top:244px;width:1px;height:18px;background:#4a4a4a"></div><div class="t" style="left:987.5px;width:600px;text-align:center;top:246.08px;font-size:14.67px;line-height:14.67px;color:#dcdcdc;">R</div><div style="position:absolute;left:28px;top:244px;width:1px;height:18px;background:#6a6a6a"></div><div style="position:absolute;left:0px;top:262px;width:1345px;height:1px;background:#8a8a8a"></div><div style="position:absolute;left:177px;top:261px;width:82px;height:2px;background:#217346"></div><div style="position:absolute;left:177px;top:244px;width:1px;height:17px;background:#a0a0a0"></div><div style="position:absolute;left:258px;top:244px;width:1px;height:17px;background:#a0a0a0"></div><div style="position:absolute;left:0px;top:263px;width:28px;height:415px;background:#262626"></div><div style="position:absolute;left:0px;top:474px;width:28px;height:20px;background:#6b6b6b"></div><div style="position:absolute;left:0px;top:281px;width:28px;height:1px;background:#4a4a4a"></div><div class="t" style="left:-286.8px;width:600px;text-align:center;top:266.08px;font-size:14.67px;line-height:14.67px;color:#e0e0e0;transform:scaleX(0.88)">10</div><div style="position:absolute;left:0px;top:301px;width:28px;height:1px;background:#4a4a4a"></div><div class="t" style="left:-286.8px;width:600px;text-align:center;top:285.08px;font-size:14.67px;line-height:14.67px;color:#e0e0e0;transform:scaleX(0.88)">11</div><div style="position:absolute;left:0px;top:320px;width:28px;height:1px;background:#4a4a4a"></div><div class="t" style="left:-286.8px;width:600px;text-align:center;top:305.08px;font-size:14.67px;line-height:14.67px;color:#e0e0e0;transform:scaleX(0.88)">12</div><div style="position:absolute;left:0px;top:340px;width:28px;height:1px;background:#4a4a4a"></div><div class="t" style="left:-286.8px;width:600px;text-align:center;top:324.08px;font-size:14.67px;line-height:14.67px;color:#e0e0e0;transform:scaleX(0.88)">13</div><div style="position:absolute;left:0px;top:359px;width:28px;height:1px;background:#4a4a4a"></div><div class="t" style="left:-286.8px;width:600px;text-align:center;top:344.08px;font-size:14.67px;line-height:14.67px;color:#e0e0e0;transform:scaleX(0.88)">14</div><div style="position:absolute;left:0px;top:378px;width:28px;height:1px;background:#4a4a4a"></div><div class="t" style="left:-286.8px;width:600px;text-align:center;top:363.08px;font-size:14.67px;line-height:14.67px;color:#e0e0e0;transform:scaleX(0.88)">15</div><div style="position:absolute;left:0px;top:397px;width:28px;height:1px;background:#4a4a4a"></div><div class="t" style="left:-286.8px;width:600px;text-align:center;top:382.08px;font-size:14.67px;line-height:14.67px;color:#e0e0e0;transform:scaleX(0.88)">16</div><div style="position:absolute;left:0px;top:416px;width:28px;height:1px;background:#4a4a4a"></div><div class="t" style="left:-286.8px;width:600px;text-align:center;top:401.08px;font-size:14.67px;line-height:14.67px;color:#e0e0e0;transform:scaleX(0.88)">17</div><div style="position:absolute;left:0px;top:435px;width:28px;height:1px;background:#4a4a4a"></div><div class="t" style="left:-286.8px;width:600px;text-align:center;top:420.08px;font-size:14.67px;line-height:14.67px;color:#e0e0e0;transform:scaleX(0.88)">18</div><div style="position:absolute;left:0px;top:454px;width:28px;height:1px;background:#4a4a4a"></div><div class="t" style="left:-286.8px;width:600px;text-align:center;top:439.08px;font-size:14.67px;line-height:14.67px;color:#e0e0e0;transform:scaleX(0.88)">19</div><div style="position:absolute;left:0px;top:473px;width:28px;height:1px;background:#4a4a4a"></div><div class="t" style="left:-286.8px;width:600px;text-align:center;top:458.08px;font-size:14.67px;line-height:14.67px;color:#e0e0e0;transform:scaleX(0.88)">20</div><div style="position:absolute;left:0px;top:493px;width:28px;height:1px;background:#4a4a4a"></div><div class="t" style="left:-286.8px;width:600px;text-align:center;top:477.08px;font-size:14.67px;line-height:14.67px;color:#e0e0e0;transform:scaleX(0.88)">21</div><div style="position:absolute;left:0px;top:513px;width:28px;height:1px;background:#4a4a4a"></div><div class="t" style="left:-286.8px;width:600px;text-align:center;top:497.08px;font-size:14.67px;line-height:14.67px;color:#e0e0e0;transform:scaleX(0.88)">22</div><div style="position:absolute;left:0px;top:532px;width:28px;height:1px;background:#4a4a4a"></div><div class="t" style="left:-286.8px;width:600px;text-align:center;top:517.08px;font-size:14.67px;line-height:14.67px;color:#e0e0e0;transform:scaleX(0.88)">23</div><div style="position:absolute;left:0px;top:552px;width:28px;height:1px;background:#4a4a4a"></div><div class="t" style="left:-286.8px;width:600px;text-align:center;top:536.08px;font-size:14.67px;line-height:14.67px;color:#e0e0e0;transform:scaleX(0.88)">24</div><div style="position:absolute;left:0px;top:572px;width:28px;height:1px;background:#4a4a4a"></div><div class="t" style="left:-286.8px;width:600px;text-align:center;top:556.08px;font-size:14.67px;line-height:14.67px;color:#e0e0e0;transform:scaleX(0.88)">25</div><div style="position:absolute;left:0px;top:591px;width:28px;height:1px;background:#4a4a4a"></div><div class="t" style="left:-286.8px;width:600px;text-align:center;top:576.08px;font-size:14.67px;line-height:14.67px;color:#e0e0e0;transform:scaleX(0.88)">26</div><div style="position:absolute;left:0px;top:610px;width:28px;height:1px;background:#4a4a4a"></div><div class="t" style="left:-286.8px;width:600px;text-align:center;top:595.08px;font-size:14.67px;line-height:14.67px;color:#e0e0e0;transform:scaleX(0.88)">27</div><div style="position:absolute;left:0px;top:629px;width:28px;height:1px;background:#4a4a4a"></div><div class="t" style="left:-286.8px;width:600px;text-align:center;top:614.08px;font-size:14.67px;line-height:14.67px;color:#e0e0e0;transform:scaleX(0.88)">28</div><div style="position:absolute;left:0px;top:648px;width:28px;height:1px;background:#4a4a4a"></div><div class="t" style="left:-286.8px;width:600px;text-align:center;top:633.08px;font-size:14.67px;line-height:14.67px;color:#e0e0e0;transform:scaleX(0.88)">29</div><div style="position:absolute;left:0px;top:667px;width:28px;height:1px;background:#4a4a4a"></div><div class="t" style="left:-286.8px;width:600px;text-align:center;top:652.08px;font-size:14.67px;line-height:14.67px;color:#e0e0e0;transform:scaleX(0.88)">30</div><div style="position:absolute;left:0px;top:687px;width:28px;height:1px;background:#4a4a4a"></div><div class="t" style="left:-286.8px;width:600px;text-align:center;top:671.08px;font-size:14.67px;line-height:14.67px;color:#e0e0e0;transform:scaleX(0.88)">31</div><div style="position:absolute;left:28px;top:263px;width:1px;height:415px;background:#6a6a6a"></div><div style="position:absolute;left:0px;top:473px;width:27px;height:1px;background:#b0b0b0"></div><div style="position:absolute;left:0px;top:493px;width:27px;height:1px;background:#b0b0b0"></div><div style="position:absolute;left:27px;top:473px;width:2px;height:21px;background:#217346"></div><div style="position:absolute;left:29px;top:263px;width:1315px;height:415px;overflow:hidden;background:#fff"><div style="position:absolute;left:0px;top:18px;width:230px;height:1px;background:#000"></div><div style="position:absolute;left:0px;top:37px;width:230px;height:2px;background:#000"></div><div style="position:absolute;left:148px;top:-1px;width:1px;height:39px;background:#000"></div><div style="position:absolute;left:228px;top:-1px;width:2px;height:41px;background:#000"></div><div class="t" style="left:-226.5px;width:600px;text-align:center;top:3.80px;font-size:13px;line-height:13px;color:#000;">Minimum Daily Load</div><div class="t" style="left:-111px;width:600px;text-align:center;top:3.80px;font-size:13px;line-height:13px;color:#000;">0</div><div class="t" style="left:-226.5px;width:600px;text-align:center;top:22.70px;font-size:13px;line-height:13px;color:#000;">Maximum Daily Load</div><div class="t" style="left:-111px;width:600px;text-align:center;top:22.70px;font-size:13px;line-height:13px;color:#000;">600</div><div style="position:absolute;left:0px;top:77px;width:230px;height:38px;background:#3f3f3f"></div><div style="position:absolute;left:0px;top:76px;width:230px;height:2px;background:#000"></div><div style="position:absolute;left:0px;top:115px;width:230px;height:1px;background:#000"></div><div class="t" style="left:-185.5px;width:600px;text-align:center;top:89.58px;font-size:14.67px;line-height:14.67px;color:#ffffff;">Calculation Checker</div><div style="position:absolute;left:0px;top:134px;width:230px;height:1px;background:#000"></div><div class="t" style="left:-226.5px;width:600px;text-align:center;top:119.70px;font-size:13px;line-height:13px;color:#000;">Max ACWR:</div><div class="t" style="left:-111px;width:600px;text-align:center;top:119.70px;font-size:13px;line-height:13px;color:#000;">1.30</div><div style="position:absolute;left:0px;top:153px;width:230px;height:1px;background:#000"></div><div class="t" style="left:-226.5px;width:600px;text-align:center;top:138.70px;font-size:13px;line-height:13px;color:#000;">Min ACWR:</div><div class="t" style="left:-111px;width:600px;text-align:center;top:138.70px;font-size:13px;line-height:13px;color:#000;">0.82</div><div style="position:absolute;left:0px;top:172px;width:230px;height:1px;background:#000"></div><div class="t" style="left:-226.5px;width:600px;text-align:center;top:157.70px;font-size:13px;line-height:13px;color:#000;">Max Chronic:</div><div class="t" style="left:-111px;width:600px;text-align:center;top:157.70px;font-size:13px;line-height:13px;color:#000;">350</div><div style="position:absolute;left:0px;top:191px;width:230px;height:1px;background:#000"></div><div class="t" style="left:-226.5px;width:600px;text-align:center;top:176.70px;font-size:13px;line-height:13px;color:#000;">Readiness on Day 100:</div><div class="t" style="left:-111px;width:600px;text-align:center;top:176.70px;font-size:13px;line-height:13px;color:#000;">93</div><div style="position:absolute;left:0px;top:210px;width:230px;height:1px;background:#000"></div><div class="t" style="left:-226.5px;width:600px;text-align:center;top:195.70px;font-size:13px;line-height:13px;color:#000;">Max Monotony</div><div class="t" style="left:-111px;width:600px;text-align:center;top:195.70px;font-size:13px;line-height:13px;color:#000;">2.24</div><div style="position:absolute;left:0px;top:230px;width:230px;height:1px;background:#000"></div><div class="t" style="left:-226.5px;width:600px;text-align:center;top:214.70px;font-size:13px;line-height:13px;color:#000;">Minimum Daily Load</div><div class="t" style="left:-226.5px;width:600px;text-align:center;top:234.70px;font-size:13px;line-height:13px;color:#000;">Maximum Daily Load</div><div class="t" style="left:-111px;width:600px;text-align:center;top:234.70px;font-size:13px;line-height:13px;color:#000;">600</div><div style="position:absolute;left:0px;top:249px;width:230px;height:2px;background:#000"></div><div style="position:absolute;left:148px;top:115px;width:1px;height:135px;background:#000"></div><div style="position:absolute;left:228px;top:76px;width:2px;height:176px;background:#000"></div><div style="position:absolute;left:147px;top:209px;width:84px;height:23px;border:2px solid #217346;box-sizing:border-box"></div><div style="position:absolute;left:227px;top:228px;width:5px;height:5px;background:#217346;border:1px solid #fff;box-sizing:content-box;margin:-1px"></div><div style="position:absolute;left:149px;top:211px;width:80px;height:19px;overflow:hidden"><div class="t" style="left:0px;top:3.40px;font-size:13px;line-height:13px;color:#000">(G3:G102)</div></div><div style="position:absolute;left:0px;top:289px;width:316px;height:20px;background:#3f3f3f"></div><div style="position:absolute;left:0px;top:288px;width:316px;height:2px;background:#000"></div><div style="position:absolute;left:0px;top:308px;width:316px;height:2px;background:#000"></div><div style="position:absolute;left:147px;top:289px;width:2px;height:21px;background:#000"></div><div style="position:absolute;left:228px;top:289px;width:2px;height:21px;background:#000"></div><div style="position:absolute;left:314px;top:288px;width:2px;height:149px;background:#000"></div><div class="t" style="left:-227.5px;width:600px;text-align:center;top:292.38px;font-size:14.67px;line-height:14.67px;color:#ffffff;">Week</div><div class="t" style="left:-111px;width:600px;text-align:center;top:292.38px;font-size:14.67px;line-height:14.67px;color:#ffffff;">Total Load</div><div class="t" style="left:-29px;width:600px;text-align:center;top:292.38px;font-size:14.67px;line-height:14.67px;color:#ffffff;">% Change</div><div class="t" style="left:-226px;width:600px;text-align:center;top:312.38px;font-size:14.67px;line-height:14.67px;color:#000;">Week 1</div><div class="t" style="left:-110.5px;width:600px;text-align:center;top:312.38px;font-size:14.67px;line-height:14.67px;color:#000;">1373</div><div class="t" style="left:-226px;width:600px;text-align:center;top:331.38px;font-size:14.67px;line-height:14.67px;color:#000;">Week 2</div><div class="t" style="left:-110.5px;width:600px;text-align:center;top:331.38px;font-size:14.67px;line-height:14.67px;color:#000;">1143</div><div class="t" style="left:-28.5px;width:600px;text-align:center;top:331.38px;font-size:14.67px;line-height:14.67px;color:#000;">-17%</div><div class="t" style="left:-226px;width:600px;text-align:center;top:350.38px;font-size:14.67px;line-height:14.67px;color:#000;">Week 3</div><div class="t" style="left:-110.5px;width:600px;text-align:center;top:350.38px;font-size:14.67px;line-height:14.67px;color:#000;">1638</div><div class="t" style="left:-28.5px;width:600px;text-align:center;top:350.38px;font-size:14.67px;line-height:14.67px;color:#000;">43%</div><div class="t" style="left:-226px;width:600px;text-align:center;top:369.38px;font-size:14.67px;line-height:14.67px;color:#000;">Week 4</div><div class="t" style="left:-110.5px;width:600px;text-align:center;top:369.38px;font-size:14.67px;line-height:14.67px;color:#000;">1236</div><div class="t" style="left:-28.5px;width:600px;text-align:center;top:369.38px;font-size:14.67px;line-height:14.67px;color:#000;">-25%</div><div class="t" style="left:-226px;width:600px;text-align:center;top:388.38px;font-size:14.67px;line-height:14.67px;color:#000;">Week 5</div><div class="t" style="left:-110.5px;width:600px;text-align:center;top:388.38px;font-size:14.67px;line-height:14.67px;color:#000;">1813</div><div class="t" style="left:-28.5px;width:600px;text-align:center;top:388.38px;font-size:14.67px;line-height:14.67px;color:#000;">47%</div><div class="t" style="left:-226px;width:600px;text-align:center;top:407.38px;font-size:14.67px;line-height:14.67px;color:#000;">Week 6</div><div class="t" style="left:-110.5px;width:600px;text-align:center;top:407.38px;font-size:14.67px;line-height:14.67px;color:#000;">2192</div><div class="t" style="left:-28.5px;width:600px;text-align:center;top:407.38px;font-size:14.67px;line-height:14.67px;color:#000;">21%</div><div style="position:absolute;left:326px;top:-1px;width:2px;height:438px;background:#000"></div><div style="position:absolute;left:837px;top:-1px;width:2px;height:438px;background:#000"></div><div style="position:absolute;left:482px;top:-1px;width:44px;height:420px;background:#eef3fc"></div><div style="position:absolute;left:480px;top:-1px;width:2px;height:420px;background:#5b8ee6"></div><div style="position:absolute;left:525px;top:-1px;width:2px;height:420px;background:#5b8ee6"></div><div class="t" style="left:336.5px;top:1.98px;font-size:14.67px;line-height:14.67px;color:#000;">Week 2</div><div class="t" style="left:138.5px;width:600px;text-align:center;top:1.98px;font-size:14.67px;line-height:14.67px;color:#000;">24/07/2017</div><div class="t" style="left:204px;width:600px;text-align:center;top:1.98px;font-size:14.67px;line-height:14.67px;color:#000;">271</div><div class="t" style="left:268px;width:600px;text-align:center;top:1.98px;font-size:14.67px;line-height:14.67px;color:#000;">183</div><div class="t" style="left:361px;width:600px;text-align:center;top:1.98px;font-size:14.67px;line-height:14.67px;color:#000;">153</div><div class="t" style="left:439.29999999999995px;width:600px;text-align:center;top:1.98px;font-size:14.67px;line-height:14.67px;color:#000;">1.20</div><div class="t" style="left:503.29999999999995px;width:600px;text-align:center;top:1.98px;font-size:14.67px;line-height:14.67px;color:#000;">1.44</div><div class="t" style="left:336.5px;top:20.98px;font-size:14.67px;line-height:14.67px;color:#000;">Week 2</div><div class="t" style="left:138.5px;width:600px;text-align:center;top:20.98px;font-size:14.67px;line-height:14.67px;color:#000;">25/07/2017</div><div class="t" style="left:204px;width:600px;text-align:center;top:20.98px;font-size:14.67px;line-height:14.67px;color:#000;">0</div><div class="t" style="left:268px;width:600px;text-align:center;top:20.98px;font-size:14.67px;line-height:14.67px;color:#000;">205</div><div class="t" style="left:361px;width:600px;text-align:center;top:20.98px;font-size:14.67px;line-height:14.67px;color:#000;">161</div><div class="t" style="left:439.29999999999995px;width:600px;text-align:center;top:20.98px;font-size:14.67px;line-height:14.67px;color:#000;">1.27</div><div class="t" style="left:503.29999999999995px;width:600px;text-align:center;top:20.98px;font-size:14.67px;line-height:14.67px;color:#000;">1.19</div><div class="t" style="left:336.5px;top:40.98px;font-size:14.67px;line-height:14.67px;color:#000;">Week 2</div><div class="t" style="left:138.5px;width:600px;text-align:center;top:40.98px;font-size:14.67px;line-height:14.67px;color:#000;">26/07/2017</div><div class="t" style="left:204px;width:600px;text-align:center;top:40.98px;font-size:14.67px;line-height:14.67px;color:#000;">188</div><div class="t" style="left:268px;width:600px;text-align:center;top:40.98px;font-size:14.67px;line-height:14.67px;color:#000;">154</div><div class="t" style="left:361px;width:600px;text-align:center;top:40.98px;font-size:14.67px;line-height:14.67px;color:#000;">150</div><div class="t" style="left:439.29999999999995px;width:600px;text-align:center;top:40.98px;font-size:14.67px;line-height:14.67px;color:#000;">1.03</div><div class="t" style="left:503.29999999999995px;width:600px;text-align:center;top:40.98px;font-size:14.67px;line-height:14.67px;color:#000;">1.25</div><div class="t" style="left:336.5px;top:59.98px;font-size:14.67px;line-height:14.67px;color:#000;">Week 2</div><div class="t" style="left:138.5px;width:600px;text-align:center;top:59.98px;font-size:14.67px;line-height:14.67px;color:#000;">27/07/2017</div><div class="t" style="left:204px;width:600px;text-align:center;top:59.98px;font-size:14.67px;line-height:14.67px;color:#000;">162</div><div class="t" style="left:268px;width:600px;text-align:center;top:59.98px;font-size:14.67px;line-height:14.67px;color:#000;">162</div><div class="t" style="left:361px;width:600px;text-align:center;top:59.98px;font-size:14.67px;line-height:14.67px;color:#000;">153</div><div class="t" style="left:439.29999999999995px;width:600px;text-align:center;top:59.98px;font-size:14.67px;line-height:14.67px;color:#000;">1.06</div><div class="t" style="left:503.29999999999995px;width:600px;text-align:center;top:59.98px;font-size:14.67px;line-height:14.67px;color:#000;">1.70</div><div class="t" style="left:336.5px;top:79.98px;font-size:14.67px;line-height:14.67px;color:#000;">Week 2</div><div class="t" style="left:138.5px;width:600px;text-align:center;top:79.98px;font-size:14.67px;line-height:14.67px;color:#000;">28/07/2017</div><div class="t" style="left:204px;width:600px;text-align:center;top:79.98px;font-size:14.67px;line-height:14.67px;color:#000;">270</div><div class="t" style="left:268px;width:600px;text-align:center;top:79.98px;font-size:14.67px;line-height:14.67px;color:#000;">162</div><div class="t" style="left:361px;width:600px;text-align:center;top:79.98px;font-size:14.67px;line-height:14.67px;color:#000;">153</div><div class="t" style="left:439.29999999999995px;width:600px;text-align:center;top:79.98px;font-size:14.67px;line-height:14.67px;color:#000;">1.06</div><div class="t" style="left:503.29999999999995px;width:600px;text-align:center;top:79.98px;font-size:14.67px;line-height:14.67px;color:#000;">1.73</div><div class="t" style="left:336.5px;top:98.98px;font-size:14.67px;line-height:14.67px;color:#000;">Week 2</div><div class="t" style="left:138.5px;width:600px;text-align:center;top:98.98px;font-size:14.67px;line-height:14.67px;color:#000;">29/07/2017</div><div class="t" style="left:204px;width:600px;text-align:center;top:98.98px;font-size:14.67px;line-height:14.67px;color:#000;">166</div><div class="t" style="left:268px;width:600px;text-align:center;top:98.98px;font-size:14.67px;line-height:14.67px;color:#000;">189</div><div class="t" style="left:361px;width:600px;text-align:center;top:98.98px;font-size:14.67px;line-height:14.67px;color:#000;">161</div><div class="t" style="left:439.29999999999995px;width:600px;text-align:center;top:98.98px;font-size:14.67px;line-height:14.67px;color:#000;">1.17</div><div class="t" style="left:503.29999999999995px;width:600px;text-align:center;top:98.98px;font-size:14.67px;line-height:14.67px;color:#000;">1.87</div><div class="t" style="left:336.5px;top:117.98px;font-size:14.67px;line-height:14.67px;color:#000;">Week 2</div><div class="t" style="left:138.5px;width:600px;text-align:center;top:117.98px;font-size:14.67px;line-height:14.67px;color:#000;">30/07/2017</div><div class="t" style="left:204px;width:600px;text-align:center;top:117.98px;font-size:14.67px;line-height:14.67px;color:#000;">87</div><div class="t" style="left:268px;width:600px;text-align:center;top:117.98px;font-size:14.67px;line-height:14.67px;color:#000;">183</div><div class="t" style="left:361px;width:600px;text-align:center;top:117.98px;font-size:14.67px;line-height:14.67px;color:#000;">162</div><div class="t" style="left:439.29999999999995px;width:600px;text-align:center;top:117.98px;font-size:14.67px;line-height:14.67px;color:#000;">1.14</div><div class="t" style="left:503.29999999999995px;width:600px;text-align:center;top:117.98px;font-size:14.67px;line-height:14.67px;color:#000;">1.69</div><div class="t" style="left:336.5px;top:136.98px;font-size:14.67px;line-height:14.67px;color:#000;">Week 3</div><div class="t" style="left:138.5px;width:600px;text-align:center;top:136.98px;font-size:14.67px;line-height:14.67px;color:#000;">31/07/2017</div><div class="t" style="left:204px;width:600px;text-align:center;top:136.98px;font-size:14.67px;line-height:14.67px;color:#000;">93</div><div class="t" style="left:268px;width:600px;text-align:center;top:136.98px;font-size:14.67px;line-height:14.67px;color:#000;">159</div><div class="t" style="left:361px;width:600px;text-align:center;top:136.98px;font-size:14.67px;line-height:14.67px;color:#000;">156</div><div class="t" style="left:439.29999999999995px;width:600px;text-align:center;top:136.98px;font-size:14.67px;line-height:14.67px;color:#000;">1.02</div><div class="t" style="left:503.29999999999995px;width:600px;text-align:center;top:136.98px;font-size:14.67px;line-height:14.67px;color:#000;">1.59</div><div class="t" style="left:336.5px;top:155.98px;font-size:14.67px;line-height:14.67px;color:#000;">Week 3</div><div class="t" style="left:138.5px;width:600px;text-align:center;top:155.98px;font-size:14.67px;line-height:14.67px;color:#000;">01/08/2017</div><div class="t" style="left:204px;width:600px;text-align:center;top:155.98px;font-size:14.67px;line-height:14.67px;color:#000;">440</div><div class="t" style="left:268px;width:600px;text-align:center;top:155.98px;font-size:14.67px;line-height:14.67px;color:#000;">143</div><div class="t" style="left:361px;width:600px;text-align:center;top:155.98px;font-size:14.67px;line-height:14.67px;color:#000;">152</div><div class="t" style="left:439.29999999999995px;width:600px;text-align:center;top:155.98px;font-size:14.67px;line-height:14.67px;color:#000;">0.94</div><div class="t" style="left:503.29999999999995px;width:600px;text-align:center;top:155.98px;font-size:14.67px;line-height:14.67px;color:#000;">1.64</div><div class="t" style="left:336.5px;top:174.98px;font-size:14.67px;line-height:14.67px;color:#000;">Week 3</div><div class="t" style="left:138.5px;width:600px;text-align:center;top:174.98px;font-size:14.67px;line-height:14.67px;color:#000;">02/08/2017</div><div class="t" style="left:204px;width:600px;text-align:center;top:174.98px;font-size:14.67px;line-height:14.67px;color:#000;">220</div><div class="t" style="left:268px;width:600px;text-align:center;top:174.98px;font-size:14.67px;line-height:14.67px;color:#000;">217</div><div class="t" style="left:361px;width:600px;text-align:center;top:174.98px;font-size:14.67px;line-height:14.67px;color:#000;">172</div><div class="t" style="left:439.29999999999995px;width:600px;text-align:center;top:174.98px;font-size:14.67px;line-height:14.67px;color:#000;">1.26</div><div class="t" style="left:503.29999999999995px;width:600px;text-align:center;top:174.98px;font-size:14.67px;line-height:14.67px;color:#000;">1.68</div><div class="t" style="left:336.5px;top:193.98px;font-size:14.67px;line-height:14.67px;color:#000;">Week 3</div><div class="t" style="left:138.5px;width:600px;text-align:center;top:193.98px;font-size:14.67px;line-height:14.67px;color:#000;">03/08/2017</div><div class="t" style="left:204px;width:600px;text-align:center;top:193.98px;font-size:14.67px;line-height:14.67px;color:#000;">237</div><div class="t" style="left:268px;width:600px;text-align:center;top:193.98px;font-size:14.67px;line-height:14.67px;color:#000;">218</div><div class="t" style="left:361px;width:600px;text-align:center;top:193.98px;font-size:14.67px;line-height:14.67px;color:#000;">175</div><div class="t" style="left:439.29999999999995px;width:600px;text-align:center;top:193.98px;font-size:14.67px;line-height:14.67px;color:#000;">1.24</div><div class="t" style="left:503.29999999999995px;width:600px;text-align:center;top:193.98px;font-size:14.67px;line-height:14.67px;color:#000;">1.78</div><div class="t" style="left:336.5px;top:212.98px;font-size:14.67px;line-height:14.67px;color:#000;">Week 3</div><div class="t" style="left:138.5px;width:600px;text-align:center;top:212.98px;font-size:14.67px;line-height:14.67px;color:#000;">04/08/2017</div><div class="t" style="left:204px;width:600px;text-align:center;top:212.98px;font-size:14.67px;line-height:14.67px;color:#000;">0</div><div class="t" style="left:268px;width:600px;text-align:center;top:212.98px;font-size:14.67px;line-height:14.67px;color:#000;">223</div><div class="t" style="left:361px;width:600px;text-align:center;top:212.98px;font-size:14.67px;line-height:14.67px;color:#000;">179</div><div class="t" style="left:439.29999999999995px;width:600px;text-align:center;top:212.98px;font-size:14.67px;line-height:14.67px;color:#000;">1.24</div><div class="t" style="left:503.29999999999995px;width:600px;text-align:center;top:212.98px;font-size:14.67px;line-height:14.67px;color:#000;">1.25</div><div class="t" style="left:336.5px;top:232.98px;font-size:14.67px;line-height:14.67px;color:#000;">Week 3</div><div class="t" style="left:138.5px;width:600px;text-align:center;top:232.98px;font-size:14.67px;line-height:14.67px;color:#000;">05/08/2017</div><div class="t" style="left:204px;width:600px;text-align:center;top:232.98px;font-size:14.67px;line-height:14.67px;color:#000;">408</div><div class="t" style="left:268px;width:600px;text-align:center;top:232.98px;font-size:14.67px;line-height:14.67px;color:#000;">167</div><div class="t" style="left:361px;width:600px;text-align:center;top:232.98px;font-size:14.67px;line-height:14.67px;color:#000;">167</div><div class="t" style="left:439.29999999999995px;width:600px;text-align:center;top:232.98px;font-size:14.67px;line-height:14.67px;color:#000;">1.00</div><div class="t" style="left:503.29999999999995px;width:600px;text-align:center;top:232.98px;font-size:14.67px;line-height:14.67px;color:#000;">1.27</div><div class="t" style="left:336.5px;top:252.98px;font-size:14.67px;line-height:14.67px;color:#000;">Week 3</div><div class="t" style="left:138.5px;width:600px;text-align:center;top:252.98px;font-size:14.67px;line-height:14.67px;color:#000;">06/08/2017</div><div class="t" style="left:204px;width:600px;text-align:center;top:252.98px;font-size:14.67px;line-height:14.67px;color:#000;">240</div><div class="t" style="left:268px;width:600px;text-align:center;top:252.98px;font-size:14.67px;line-height:14.67px;color:#000;">227</div><div class="t" style="left:361px;width:600px;text-align:center;top:252.98px;font-size:14.67px;line-height:14.67px;color:#000;">184</div><div class="t" style="left:439.29999999999995px;width:600px;text-align:center;top:252.98px;font-size:14.67px;line-height:14.67px;color:#000;">1.24</div><div class="t" style="left:503.29999999999995px;width:600px;text-align:center;top:252.98px;font-size:14.67px;line-height:14.67px;color:#000;">1.49</div><div class="t" style="left:336.5px;top:271.98px;font-size:14.67px;line-height:14.67px;color:#000;">Week 4</div><div class="t" style="left:138.5px;width:600px;text-align:center;top:271.98px;font-size:14.67px;line-height:14.67px;color:#000;">07/08/2017</div><div class="t" style="left:204px;width:600px;text-align:center;top:271.98px;font-size:14.67px;line-height:14.67px;color:#000;">0</div><div class="t" style="left:268px;width:600px;text-align:center;top:271.98px;font-size:14.67px;line-height:14.67px;color:#000;">230</div><div class="t" style="left:361px;width:600px;text-align:center;top:271.98px;font-size:14.67px;line-height:14.67px;color:#000;">188</div><div class="t" style="left:439.29999999999995px;width:600px;text-align:center;top:271.98px;font-size:14.67px;line-height:14.67px;color:#000;">1.23</div><div class="t" style="left:503.29999999999995px;width:600px;text-align:center;top:271.98px;font-size:14.67px;line-height:14.67px;color:#000;">1.27</div><div class="t" style="left:336.5px;top:291.98px;font-size:14.67px;line-height:14.67px;color:#000;">Week 4</div><div class="t" style="left:138.5px;width:600px;text-align:center;top:291.98px;font-size:14.67px;line-height:14.67px;color:#000;">08/08/2017</div><div class="t" style="left:204px;width:600px;text-align:center;top:291.98px;font-size:14.67px;line-height:14.67px;color:#000;">200</div><div class="t" style="left:268px;width:600px;text-align:center;top:291.98px;font-size:14.67px;line-height:14.67px;color:#000;">173</div><div class="t" style="left:361px;width:600px;text-align:center;top:291.98px;font-size:14.67px;line-height:14.67px;color:#000;">175</div><div class="t" style="left:439.29999999999995px;width:600px;text-align:center;top:291.98px;font-size:14.67px;line-height:14.67px;color:#000;">0.99</div><div class="t" style="left:503.29999999999995px;width:600px;text-align:center;top:291.98px;font-size:14.67px;line-height:14.67px;color:#000;">1.29</div><div class="t" style="left:336.5px;top:311.98px;font-size:14.67px;line-height:14.67px;color:#000;">Week 4</div><div class="t" style="left:138.5px;width:600px;text-align:center;top:311.98px;font-size:14.67px;line-height:14.67px;color:#000;">09/08/2017</div><div class="t" style="left:204px;width:600px;text-align:center;top:311.98px;font-size:14.67px;line-height:14.67px;color:#000;">426</div><div class="t" style="left:268px;width:600px;text-align:center;top:311.98px;font-size:14.67px;line-height:14.67px;color:#000;">180</div><div class="t" style="left:361px;width:600px;text-align:center;top:311.98px;font-size:14.67px;line-height:14.67px;color:#000;">176</div><div class="t" style="left:439.29999999999995px;width:600px;text-align:center;top:311.98px;font-size:14.67px;line-height:14.67px;color:#000;">1.02</div><div class="t" style="left:503.29999999999995px;width:600px;text-align:center;top:311.98px;font-size:14.67px;line-height:14.67px;color:#000;">1.26</div><div class="t" style="left:336.5px;top:330.98px;font-size:14.67px;line-height:14.67px;color:#000;">Week 4</div><div class="t" style="left:138.5px;width:600px;text-align:center;top:330.98px;font-size:14.67px;line-height:14.67px;color:#000;">10/08/2017</div><div class="t" style="left:204px;width:600px;text-align:center;top:330.98px;font-size:14.67px;line-height:14.67px;color:#000;">251</div><div class="t" style="left:268px;width:600px;text-align:center;top:330.98px;font-size:14.67px;line-height:14.67px;color:#000;">241</div><div class="t" style="left:361px;width:600px;text-align:center;top:330.98px;font-size:14.67px;line-height:14.67px;color:#000;">194</div><div class="t" style="left:439.29999999999995px;width:600px;text-align:center;top:330.98px;font-size:14.67px;line-height:14.67px;color:#000;">1.25</div><div class="t" style="left:503.29999999999995px;width:600px;text-align:center;top:330.98px;font-size:14.67px;line-height:14.67px;color:#000;">1.27</div><div class="t" style="left:336.5px;top:349.98px;font-size:14.67px;line-height:14.67px;color:#000;">Week 4</div><div class="t" style="left:138.5px;width:600px;text-align:center;top:349.98px;font-size:14.67px;line-height:14.67px;color:#000;">11/08/2017</div><div class="t" style="left:204px;width:600px;text-align:center;top:349.98px;font-size:14.67px;line-height:14.67px;color:#000;">146</div><div class="t" style="left:268px;width:600px;text-align:center;top:349.98px;font-size:14.67px;line-height:14.67px;color:#000;">244</div><div class="t" style="left:361px;width:600px;text-align:center;top:349.98px;font-size:14.67px;line-height:14.67px;color:#000;">198</div><div class="t" style="left:439.29999999999995px;width:600px;text-align:center;top:349.98px;font-size:14.67px;line-height:14.67px;color:#000;">1.23</div><div class="t" style="left:503.29999999999995px;width:600px;text-align:center;top:349.98px;font-size:14.67px;line-height:14.67px;color:#000;">1.62</div><div class="t" style="left:336.5px;top:368.98px;font-size:14.67px;line-height:14.67px;color:#000;">Week 4</div><div class="t" style="left:138.5px;width:600px;text-align:center;top:368.98px;font-size:14.67px;line-height:14.67px;color:#000;">12/08/2017</div><div class="t" style="left:204px;width:600px;text-align:center;top:368.98px;font-size:14.67px;line-height:14.67px;color:#000;">107</div><div class="t" style="left:268px;width:600px;text-align:center;top:368.98px;font-size:14.67px;line-height:14.67px;color:#000;">219</div><div class="t" style="left:361px;width:600px;text-align:center;top:368.98px;font-size:14.67px;line-height:14.67px;color:#000;">194</div><div class="t" style="left:439.29999999999995px;width:600px;text-align:center;top:368.98px;font-size:14.67px;line-height:14.67px;color:#000;">1.13</div><div class="t" style="left:503.29999999999995px;width:600px;text-align:center;top:368.98px;font-size:14.67px;line-height:14.67px;color:#000;">1.47</div><div class="t" style="left:336.5px;top:387.98px;font-size:14.67px;line-height:14.67px;color:#000;">Week 4</div><div class="t" style="left:138.5px;width:600px;text-align:center;top:387.98px;font-size:14.67px;line-height:14.67px;color:#000;">13/08/2017</div><div class="t" style="left:204px;width:600px;text-align:center;top:387.98px;font-size:14.67px;line-height:14.67px;color:#000;">105</div><div class="t" style="left:268px;width:600px;text-align:center;top:387.98px;font-size:14.67px;line-height:14.67px;color:#000;">191</div><div class="t" style="left:361px;width:600px;text-align:center;top:387.98px;font-size:14.67px;line-height:14.67px;color:#000;">188</div><div class="t" style="left:439.29999999999995px;width:600px;text-align:center;top:387.98px;font-size:14.67px;line-height:14.67px;color:#000;">1.02</div><div class="t" style="left:503.29999999999995px;width:600px;text-align:center;top:387.98px;font-size:14.67px;line-height:14.67px;color:#000;">1.30</div><div class="t" style="left:336.5px;top:406.98px;font-size:14.67px;line-height:14.67px;color:#000;">Week 5</div><div class="t" style="left:138.5px;width:600px;text-align:center;top:406.98px;font-size:14.67px;line-height:14.67px;color:#000;">14/08/2017</div><div class="t" style="left:204px;width:600px;text-align:center;top:406.98px;font-size:14.67px;line-height:14.67px;color:#000;">455</div><div class="t" style="left:268px;width:600px;text-align:center;top:406.98px;font-size:14.67px;line-height:14.67px;color:#000;">170</div><div class="t" style="left:361px;width:600px;text-align:center;top:406.98px;font-size:14.67px;line-height:14.67px;color:#000;">182</div><div class="t" style="left:439.29999999999995px;width:600px;text-align:center;top:406.98px;font-size:14.67px;line-height:14.67px;color:#000;">0.93</div><div class="t" style="left:503.29999999999995px;width:600px;text-align:center;top:406.98px;font-size:14.67px;line-height:14.67px;color:#000;">1.66</div><div style="position:absolute;left:859px;top:-63px;width:470px;height:369px;background:#000;border-radius:0 0 0 1.5px"></div><div style="position:absolute;left:862px;top:-63px;width:470px;height:366px;background:#404040"></div><div style="position:absolute;left:860px;top:320px;width:470px;height:130px;background:#000;border-radius:1.5px 0 0 0"></div><div style="position:absolute;left:863px;top:323px;width:470px;height:130px;background:#404040"></div><div class="t" style="left:318.5px;width:600px;text-align:right;top:261.92px;font-size:12.7px;line-height:12.7px;color:#e6e6e6;font-weight:bold">0</div><div class="t" style="left:318.5px;width:600px;text-align:right;top:215.71px;font-size:12.7px;line-height:12.7px;color:#e6e6e6;font-weight:bold">100</div><div class="t" style="left:318.5px;width:600px;text-align:right;top:169.50px;font-size:12.7px;line-height:12.7px;color:#e6e6e6;font-weight:bold">200</div><div class="t" style="left:318.5px;width:600px;text-align:right;top:123.29px;font-size:12.7px;line-height:12.7px;color:#e6e6e6;font-weight:bold">300</div><div class="t" style="left:318.5px;width:600px;text-align:right;top:77.08px;font-size:12.7px;line-height:12.7px;color:#e6e6e6;font-weight:bold">400</div><div class="t" style="left:318.5px;width:600px;text-align:right;top:30.87px;font-size:12.7px;line-height:12.7px;color:#e6e6e6;font-weight:bold">500</div><div class="t" style="left:318.29999999999995px;width:600px;text-align:right;top:364.15px;font-size:12.7px;line-height:12.7px;color:#e6e6e6;font-weight:bold">700</div><div class="t" style="left:318.29999999999995px;width:600px;text-align:right;top:407.75px;font-size:12.7px;line-height:12.7px;color:#e6e6e6;font-weight:bold">600</div><svg style="position:absolute;left:0;top:0;overflow:hidden" width="1315" height="415" viewBox="29 263 1315 415"><rect x="962.45" y="483.66" width="2.97" height="46.76" fill="#56983c" stroke="#66ff33" stroke-width="1.3"/><rect x="971.67" y="319.62" width="2.97" height="210.80" fill="#56983c" stroke="#66ff33" stroke-width="1.3"/><rect x="980.89" y="470.26" width="2.97" height="60.16" fill="#56983c" stroke="#66ff33" stroke-width="1.3"/><rect x="989.46" y="528.87" width="4.27" height="2.2" fill="#66ff33"/><rect x="999.33" y="443.92" width="2.97" height="86.50" fill="#56983c" stroke="#66ff33" stroke-width="1.3"/><rect x="1008.55" y="368.60" width="2.97" height="161.82" fill="#56983c" stroke="#66ff33" stroke-width="1.3"/><rect x="1017.77" y="467.03" width="2.97" height="63.39" fill="#56983c" stroke="#66ff33" stroke-width="1.3"/><rect x="1026.99" y="406.49" width="2.97" height="123.93" fill="#56983c" stroke="#66ff33" stroke-width="1.3"/><rect x="1035.56" y="528.87" width="4.27" height="2.2" fill="#66ff33"/><rect x="1045.43" y="444.85" width="2.97" height="85.57" fill="#56983c" stroke="#66ff33" stroke-width="1.3"/><rect x="1054.65" y="456.86" width="2.97" height="73.56" fill="#56983c" stroke="#66ff33" stroke-width="1.3"/><rect x="1063.87" y="406.95" width="2.97" height="123.47" fill="#56983c" stroke="#66ff33" stroke-width="1.3"/><rect x="1073.09" y="455.01" width="2.97" height="75.41" fill="#56983c" stroke="#66ff33" stroke-width="1.3"/><rect x="1082.31" y="491.52" width="2.97" height="38.90" fill="#56983c" stroke="#66ff33" stroke-width="1.3"/><rect x="1091.53" y="488.74" width="2.97" height="41.68" fill="#56983c" stroke="#66ff33" stroke-width="1.3"/><rect x="1100.75" y="328.40" width="2.97" height="202.02" fill="#56983c" stroke="#66ff33" stroke-width="1.3"/><rect x="1109.97" y="430.06" width="2.97" height="100.36" fill="#56983c" stroke="#66ff33" stroke-width="1.3"/><rect x="1119.19" y="422.20" width="2.97" height="108.22" fill="#56983c" stroke="#66ff33" stroke-width="1.3"/><rect x="1127.76" y="528.87" width="4.27" height="2.2" fill="#66ff33"/><rect x="1137.63" y="343.18" width="2.97" height="187.24" fill="#56983c" stroke="#66ff33" stroke-width="1.3"/><rect x="1146.85" y="420.82" width="2.97" height="109.60" fill="#56983c" stroke="#66ff33" stroke-width="1.3"/><rect x="1155.42" y="528.87" width="4.27" height="2.2" fill="#66ff33"/><rect x="1165.29" y="439.30" width="2.97" height="91.12" fill="#56983c" stroke="#66ff33" stroke-width="1.3"/><rect x="1174.51" y="334.87" width="2.97" height="195.55" fill="#56983c" stroke="#66ff33" stroke-width="1.3"/><rect x="1183.73" y="415.73" width="2.97" height="114.69" fill="#56983c" stroke="#66ff33" stroke-width="1.3"/><rect x="1192.95" y="464.25" width="2.97" height="66.17" fill="#56983c" stroke="#66ff33" stroke-width="1.3"/><rect x="1202.17" y="482.28" width="2.97" height="48.14" fill="#56983c" stroke="#66ff33" stroke-width="1.3"/><rect x="1211.39" y="483.20" width="2.97" height="47.22" fill="#56983c" stroke="#66ff33" stroke-width="1.3"/><rect x="1220.61" y="321.46" width="2.97" height="208.96" fill="#56983c" stroke="#66ff33" stroke-width="1.3"/><rect x="1229.83" y="395.86" width="2.97" height="134.56" fill="#56983c" stroke="#66ff33" stroke-width="1.3"/><rect x="1239.05" y="421.74" width="2.97" height="108.68" fill="#56983c" stroke="#66ff33" stroke-width="1.3"/><rect x="1248.27" y="432.83" width="2.97" height="97.59" fill="#56983c" stroke="#66ff33" stroke-width="1.3"/><rect x="1257.49" y="374.61" width="2.97" height="155.81" fill="#56983c" stroke="#66ff33" stroke-width="1.3"/><rect x="1266.06" y="528.87" width="4.27" height="2.2" fill="#66ff33"/><rect x="1275.93" y="404.18" width="2.97" height="126.24" fill="#56983c" stroke="#66ff33" stroke-width="1.3"/><rect x="1285.15" y="335.79" width="2.97" height="194.63" fill="#56983c" stroke="#66ff33" stroke-width="1.3"/><rect x="1294.37" y="388.01" width="2.97" height="142.41" fill="#56983c" stroke="#66ff33" stroke-width="1.3"/><rect x="1303.59" y="466.10" width="2.97" height="64.32" fill="#56983c" stroke="#66ff33" stroke-width="1.3"/><rect x="1312.81" y="336.71" width="2.97" height="193.71" fill="#56983c" stroke="#66ff33" stroke-width="1.3"/><rect x="1322.03" y="389.86" width="2.97" height="140.56" fill="#56983c" stroke="#66ff33" stroke-width="1.3"/><rect x="1330.60" y="528.87" width="4.27" height="2.2" fill="#66ff33"/><rect x="1340.47" y="231.36" width="2.97" height="299.06" fill="#56983c" stroke="#66ff33" stroke-width="1.3"/><path d="M963.93,484.40 C965.47,484.47 970.08,491.79 973.15,484.86 C976.23,477.93 979.30,448.43 982.38,442.81 C985.45,437.19 988.52,446.66 991.59,451.13 C994.67,455.59 997.74,467.69 1000.81,469.61 C1003.89,471.54 1006.96,467.45 1010.03,462.68 C1013.11,457.90 1016.18,443.66 1019.25,440.96 C1022.33,438.26 1025.40,447.28 1028.47,446.51 C1031.55,445.74 1034.62,434.11 1037.69,436.34 C1040.77,438.57 1043.84,456.59 1046.91,459.91 C1049.99,463.22 1053.06,456.83 1056.13,456.21 C1059.21,455.59 1062.28,458.29 1065.36,456.21 C1068.43,454.13 1071.50,445.35 1074.58,443.73 C1077.65,442.12 1080.72,444.20 1083.79,446.51 C1086.87,448.82 1089.94,454.52 1093.01,457.60 C1096.09,460.68 1099.16,469.46 1102.23,464.99 C1105.31,460.52 1108.38,436.57 1111.45,430.79 C1114.53,425.02 1117.60,430.79 1120.67,430.33 C1123.75,429.87 1126.82,424.09 1129.89,428.02 C1132.97,431.95 1136.04,454.21 1139.12,453.90 C1142.19,453.59 1145.26,431.03 1148.34,426.17 C1151.41,421.32 1154.48,420.63 1157.56,424.79 C1160.63,428.95 1163.70,447.28 1166.77,451.13 C1169.85,454.98 1172.92,453.13 1175.99,447.89 C1179.07,442.65 1182.14,424.63 1185.21,419.70 C1188.29,414.77 1191.36,416.62 1194.43,418.32 C1197.51,420.01 1200.58,425.79 1203.65,429.87 C1206.73,433.95 1209.80,439.04 1212.88,442.81 C1215.95,446.58 1219.02,456.52 1222.10,452.51 C1225.17,448.51 1228.24,425.17 1231.31,418.78 C1234.39,412.39 1237.46,414.47 1240.54,414.16 C1243.61,413.85 1246.68,415.93 1249.75,416.93 C1252.83,417.93 1255.90,421.71 1258.97,420.17 C1262.05,418.63 1265.12,404.61 1268.19,407.69 C1271.27,410.77 1274.34,434.95 1277.41,438.65 C1280.49,442.35 1283.56,435.34 1286.63,429.87 C1289.71,424.40 1292.78,410.38 1295.86,405.84 C1298.93,401.30 1302.00,400.76 1305.08,402.61 C1308.15,404.45 1311.22,417.32 1314.29,416.93 C1317.37,416.55 1320.44,403.84 1323.52,400.30 C1326.59,396.75 1329.66,390.82 1332.73,395.67 C1335.81,400.53 1338.88,427.02 1341.95,429.41 C1345.03,431.80 1349.64,413.23 1351.17,410.00" stroke="#ff0000" stroke-width="2.6" fill="none" stroke-linejoin="round"/><path d="M963.93,473.77 C965.47,474.00 970.08,476.77 973.15,475.16 C976.23,473.54 979.30,465.99 982.38,464.07 C985.45,462.14 988.52,462.76 991.59,463.60 C994.67,464.45 997.74,468.76 1000.81,469.15 C1003.89,469.53 1006.96,467.45 1010.03,465.91 C1013.11,464.37 1016.18,460.83 1019.25,459.91 C1022.33,458.98 1025.40,460.91 1028.47,460.37 C1031.55,459.83 1034.62,456.44 1037.69,456.67 C1040.77,456.90 1043.84,461.14 1046.91,461.76 C1049.99,462.37 1053.06,460.60 1056.13,460.37 C1059.21,460.14 1062.28,460.98 1065.36,460.37 C1068.43,459.75 1071.50,457.37 1074.58,456.67 C1077.65,455.98 1080.72,455.82 1083.79,456.21 C1086.87,456.59 1089.94,458.21 1093.01,458.98 C1096.09,459.75 1099.16,462.06 1102.23,460.83 C1105.31,459.60 1108.38,453.36 1111.45,451.59 C1114.53,449.82 1117.60,450.74 1120.67,450.20 C1123.75,449.66 1126.82,447.74 1129.89,448.35 C1132.97,448.97 1136.04,454.28 1139.12,453.90 C1142.19,453.51 1145.26,447.66 1148.34,446.04 C1151.41,444.43 1154.48,443.50 1157.56,444.20 C1160.63,444.89 1163.70,449.28 1166.77,450.20 C1169.85,451.13 1172.92,451.20 1175.99,449.74 C1179.07,448.28 1182.14,443.12 1185.21,441.42 C1188.29,439.73 1191.36,439.57 1194.43,439.57 C1197.51,439.57 1200.58,440.65 1203.65,441.42 C1206.73,442.19 1209.80,443.27 1212.88,444.20 C1215.95,445.12 1219.02,447.89 1222.10,446.97 C1225.17,446.04 1228.24,440.50 1231.31,438.65 C1234.39,436.80 1237.46,436.42 1240.54,435.88 C1243.61,435.34 1246.68,435.65 1249.75,435.42 C1252.83,435.18 1255.90,435.42 1258.97,434.49 C1262.05,433.57 1265.12,429.25 1268.19,429.87 C1271.27,430.49 1274.34,437.57 1277.41,438.19 C1280.49,438.80 1283.56,435.26 1286.63,433.57 C1289.71,431.87 1292.78,429.41 1295.86,428.02 C1298.93,426.64 1302.00,425.17 1305.08,425.25 C1308.15,425.33 1311.22,428.95 1314.29,428.48 C1317.37,428.02 1320.44,423.94 1323.52,422.48 C1326.59,421.01 1329.66,419.01 1332.73,419.70 C1335.81,420.40 1338.88,426.25 1341.95,426.64 C1345.03,427.02 1349.64,422.78 1351.17,422.01" stroke="#0a6fc2" stroke-width="2.6" fill="none" stroke-linejoin="round"/><path d="M980.8,680 C983.1,662.4 983.7,652.9 984.9,652.9 C987.3,652.9 988.5,662.4 992.9,680 M1016.3,680 C1019.0,666.4 1019.8,659.1 1021.3,659.1 C1023.6,659.1 1024.8,666.4 1029.0,680 M1029.0,680 C1033.7,667.8 1035.0,661.2 1037.6,661.2 C1039.1,661.2 1039.8,667.8 1042.5,680 M1110.3,680 C1112.3,669.3 1112.9,663.5 1114.0,663.5 C1116.4,663.5 1117.6,669.3 1122.0,680 M1122.0,680 C1122.9,670.6 1124.7,668.2 1128.0,668.2 C1130.5,668.2 1131.9,670.6 1132.6,680 M1147.7,680 C1148.6,670.6 1150.3,668.2 1153.5,668.2 C1157.3,668.2 1159.5,670.6 1160.5,680 M1184.0,680 C1186.6,671.7 1187.4,667.2 1188.8,667.2 C1192.0,667.2 1193.5,671.7 1199.3,680 M1232.3,680 C1233.5,675.0 1236.0,673.7 1240.6,673.7 C1245.2,673.7 1247.7,675.0 1249.0,680 M1265.5,680 C1265.8,676.2 1266.5,675.2 1267.7,675.2 C1269.1,675.2 1269.9,676.2 1270.3,680 M1296.0,680 C1297.0,675.0 1298.9,673.7 1302.5,673.7 C1306.0,673.7 1307.9,675.0 1308.8,680 M1322.3,680 C1323.3,674.6 1325.3,673.2 1328.9,673.2 C1332.1,673.2 1333.8,674.6 1334.7,680 " stroke="#ff0000" stroke-width="2.6" fill="none"/></svg><div class="t" style="left:835.5px;top:100px;width:100px;height:14px;line-height:14px;text-align:center;font-size:12.7px;font-weight:bold;color:#e6e6e6;transform:rotate(-90deg)">Loads</div></div><div style="position:absolute;left:1344px;top:244px;width:22px;height:434px;background:#262626"></div><div style="position:absolute;left:1344px;top:262px;width:1px;height:416px;background:#9a9a9a"></div><div style="position:absolute;left:1349px;top:260px;width:13px;height:405px;background:#333333"></div><div style="position:absolute;left:1349px;top:247px;width:13px;height:13px;background:#555555"></div><svg style="position:absolute;left:1352px;top:251px;" width="7" height="4" viewBox="0 0 7 4"><path d="M0 4h7L3.5 0z" fill="#a8a8a8"/></svg><div style="position:absolute;left:1349px;top:297px;width:13px;height:78px;background:#5d5d5d"></div><div style="position:absolute;left:1349px;top:665px;width:13px;height:13px;background:#555555"></div><svg style="position:absolute;left:1352px;top:670px;" width="7" height="4" viewBox="0 0 7 4"><path d="M0 0h7L3.5 4z" fill="#a8a8a8"/></svg><div style="position:absolute;left:28px;top:678px;width:1317px;height:1px;background:#9a9a9a"></div><div style="position:absolute;left:0px;top:679px;width:1366px;height:27px;background:#262626"></div><svg style="position:absolute;left:27px;top:686px;" width="6" height="10" viewBox="0 0 6 10"><path d="M5.5 0.5v9L0.5 5z" fill="#9a9a9a"/></svg><svg style="position:absolute;left:55px;top:686px;" width="6" height="10" viewBox="0 0 6 10"><path d="M0.5 0.5v9L5.5 5z" fill="#9a9a9a"/></svg><div style="position:absolute;left:100px;top:678px;width:105px;height:24px;background:#ffffff"></div><div style="position:absolute;left:100px;top:701px;width:105px;height:2px;background:#217346"></div><div class="t" style="left:-147.5px;width:600px;text-align:center;top:684.57px;font-size:13.5px;line-height:13.5px;color:#217346;font-weight:bold">Optimisation</div><svg style="position:absolute;left:236px;top:682px;" width="19" height="19" viewBox="0 0 19 19"><circle cx="9.5" cy="9.5" r="7.8" stroke="#e0e0e0" stroke-width="1.4" fill="none"/><path d="M9.5 5v9M5 9.5h9" stroke="#e0e0e0" stroke-width="2"/></svg><svg style="position:absolute;left:818px;top:686px;" width="4" height="14" viewBox="0 0 4 14"><circle cx="2" cy="2" r="1.3" fill="#eee"/><circle cx="2" cy="7" r="1.3" fill="#eee"/><circle cx="2" cy="12" r="1.3" fill="#eee"/></svg><div style="position:absolute;left:837px;top:685px;width:509px;height:15px;background:#2f2f2f"></div><div style="position:absolute;left:837px;top:686px;width:14px;height:13px;background:#444"></div><svg style="position:absolute;left:841px;top:688px;" width="6" height="9" viewBox="0 0 6 9"><path d="M5.5 0.5v8L0.5 4.5z" fill="#9a9a9a"/></svg><div style="position:absolute;left:852px;top:686px;width:269px;height:13px;background:#5a5a5a"></div><div style="position:absolute;left:1331px;top:686px;width:15px;height:13px;background:#444"></div><svg style="position:absolute;left:1336px;top:688px;" width="6" height="9" viewBox="0 0 6 9"><path d="M0.5 0.5v8L5.5 4.5z" fill="#9a9a9a"/></svg><div style="position:absolute;left:0px;top:706px;width:1366px;height:1px;background:#3c3c3c"></div><div style="position:absolute;left:0px;top:707px;width:1366px;height:21px;background:#2d2d2d"></div><div class="t" style="left:8px;top:710.84px;font-size:12px;line-height:12px;color:#e8e8e8;">Edit</div><svg style="position:absolute;left:58px;top:709px;" width="14" height="15" viewBox="0 0 14 15"><circle cx="3.5" cy="3.5" r="3" fill="#ccc"/><rect x="2" y="4.5" width="12" height="10" fill="#ccc"/><path d="M2 8h12M2 11h12M6 4.5v10M10 4.5v10" stroke="#2d2d2d" stroke-width="1"/><rect x="7" y="1" width="7" height="3" fill="#ccc"/></svg><svg style="position:absolute;left:1086px;top:710px;" width="13" height="13" viewBox="0 0 13 13"><path d="M0.5 0.5h12v12h-12zM4.5 0.5v12M8.5 0.5v12M0.5 4.5h12M0.5 8.5h12" stroke="#f0f0f0" fill="none"/></svg><svg style="position:absolute;left:1124px;top:710px;" width="14" height="13" viewBox="0 0 14 13"><path d="M0.5 0.5h13v12h-13z" stroke="#f0f0f0" fill="none"/><path d="M3.5 2.5h7v8h-7z" stroke="#f0f0f0" fill="none"/><path d="M5 4.5h4M5 6.5h4M5 8.5h4" stroke="#f0f0f0"/></svg><svg style="position:absolute;left:1162px;top:710px;" width="14" height="13" viewBox="0 0 14 13"><path d="M0.5 0.5h13v12h-13z" stroke="#f0f0f0" fill="none"/><rect x="1" y="1" width="3" height="7" fill="#e8e8e8"/><rect x="5.5" y="1" width="3" height="7" fill="#e8e8e8"/></svg><div style="position:absolute;left:1193px;top:716px;width:6px;height:2px;background:#555"></div><div style="position:absolute;left:1203px;top:716px;width:100px;height:1px;background:#e0e0e0"></div><div style="position:absolute;left:1252px;top:712px;width:1px;height:9px;background:#e0e0e0"></div><div style="position:absolute;left:1306px;top:716px;width:10px;height:1.5px;background:#4a4a4a"></div><div style="position:absolute;left:1310.25px;top:712px;width:1.5px;height:10px;background:#4a4a4a"></div><div class="t" style="left:1331px;top:711.52px;font-size:11.2px;line-height:11.2px;color:#b4b4b4;">100%</div><div style="position:absolute;left:0px;top:728px;width:1366px;height:40px;background:#050505"></div><svg style="position:absolute;left:17px;top:740px;" width="16" height="16" viewBox="0 0 16 16"><path d="M0 2.3L6.5 1.4v6.2H0zM7.3 1.3L16 0v7.6H7.3zM0 8.4h6.5v6.2L0 13.7zM7.3 8.4H16V16l-8.7-1.2z" fill="#fff"/></svg><svg style="position:absolute;left:63px;top:738px;" width="18" height="20" viewBox="0 0 18 20"><circle cx="11" cy="7" r="5.8" stroke="#fff" stroke-width="1.4" fill="none"/><path d="M7 11.2L1 18" stroke="#fff" stroke-width="1.6"/></svg><svg style="position:absolute;left:109px;top:741px;" width="22" height="15" viewBox="0 0 22 15"><rect x="4.5" y="0.5" width="12" height="13" stroke="#fff" stroke-width="1.2" fill="none"/><path d="M2.5 2.5H1V11.5H2.5M18.5 2.5H20V11.5H18.5" stroke="#fff" stroke-width="1" fill="none"/></svg><div style="position:absolute;left:147px;top:728px;width:44px;height:40px;background:#333338"></div><div style="position:absolute;left:191px;top:728px;width:4px;height:40px;background:#1e1e1e"></div><div style="position:absolute;left:147px;top:766px;width:44px;height:2px;background:#9a9a9a"></div><div style="position:absolute;left:200px;top:766px;width:40px;height:2px;background:#9a9a9a"></div><svg style="position:absolute;left:159px;top:736px;" width="24" height="24" viewBox="0 0 24 24"><rect x="13.5" y="3.5" width="9" height="17" fill="#fff"/><path d="M15 5.5h6v2.5h-6zM15 9h6v2.5h-6zM15 12.5h6v2.5h-6zM15 16h6v2.5h-6z" fill="#3f9a62"/><path d="M18 5v14" stroke="#fff" stroke-width="1"/><path d="M0.7 2.5L14 1v22L0.7 20.5z" fill="#1f7a45"/><path d="M3.2 8l5 8M8.2 8l-5 8" stroke="#fff" stroke-width="1.9"/></svg><svg style="position:absolute;left:208px;top:737px;" width="22" height="22" viewBox="0 0 22 22"><circle cx="11" cy="11" r="10.5" fill="#db4437"/><path d="M11 11 L20.1 5.75 A10.5 10.5 0 0 1 5.75 20.1z" fill="#f4c20d"/><path d="M11 11 L5.75 20.1 A10.5 10.5 0 0 1 1.9 5.75z" fill="#0f9d58"/><circle cx="11" cy="11" r="5" fill="#fff"/><circle cx="11" cy="11" r="3.9" fill="#4285f4"/></svg><svg style="position:absolute;left:1188px;top:744px;" width="14" height="8" viewBox="0 0 14 8"><path d="M1 7l6-6 6 6" stroke="#fff" stroke-width="1.3" fill="none"/></svg><svg style="position:absolute;left:1210px;top:741px;" width="19" height="13" viewBox="0 0 19 13"><path d="M2.7 1v3M5.3 1v3M1.5 4h5v2.5a2.5 2.5 0 0 1-5 0zM4 9v3H5" stroke="#fff" stroke-width="1.1" fill="none"/><rect x="5.6" y="4.6" width="11" height="7" stroke="#fff" stroke-width="1.2" fill="none"/><rect x="7.2" y="6.2" width="6.5" height="3.8" fill="#fff"/><rect x="16.6" y="6.5" width="1.4" height="3.2" fill="#fff"/></svg><svg style="position:absolute;left:1236px;top:742px;" width="14" height="13" viewBox="0 0 14 13"><path d="M1 11.5A10.5 10.5 0 0 1 11.5 1M4 11.5A7.5 7.5 0 0 1 11.5 4M7 11.5A4.5 4.5 0 0 1 11.5 7" stroke="#fff" stroke-width="1.1" fill="none"/><circle cx="12.3" cy="11.3" r="1.3" fill="#fff"/></svg><div class="t" style="left:1261px;top:742.19px;font-size:11px;line-height:11px;color:#ffffff;">ENG</div><div style="position:absolute;left:1361px;top:728px;width:1px;height:40px;background:#3a3a3a"></div><div class="t" style="left:1025px;width:600px;text-align:center;top:733.10px;font-size:11.7px;line-height:11.7px;color:#ffffff;">22:04</div><div class="t" style="left:1025px;width:600px;text-align:center;top:751.10px;font-size:11.7px;line-height:11.7px;color:#ffffff;">11/07/2017</div>
</body></html>
